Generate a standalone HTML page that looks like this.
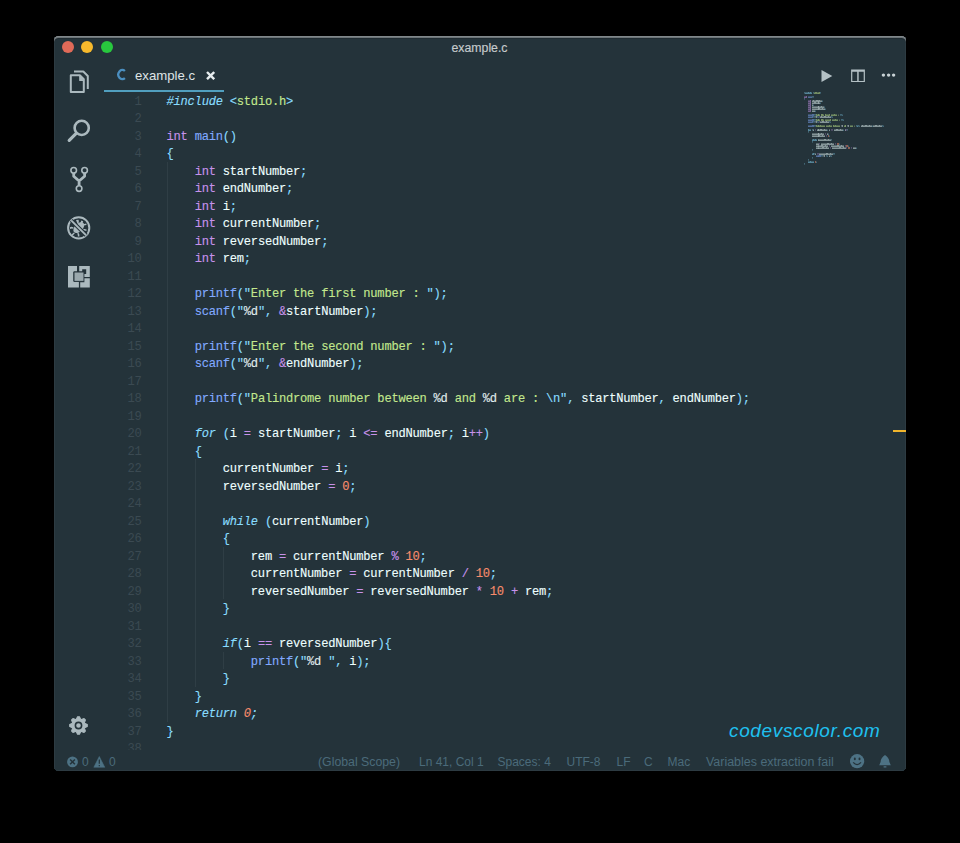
<!DOCTYPE html>
<html><head><meta charset="utf-8">
<style>
html,body{margin:0;padding:0;width:960px;height:843px;overflow:hidden;background:#000;}
body{position:relative;font-family:"Liberation Sans",sans-serif;}
.win{position:absolute;left:54px;top:36px;width:852px;height:735px;background:#24333a;border-radius:4.5px;overflow:hidden;box-shadow:inset 0 1px 0 #80878a, inset 0 2px 0 #6b7377, inset 0 3px 0 #1f2b31, inset 1px 0 0 #2d3b42, inset -1px 0 0 #2d3b42, inset 0 -1px 0 #2d3b42;}
.in{position:absolute;left:1px;top:0;width:851px;height:735px;}
.abs{position:absolute;}
.tl{position:absolute;top:5.4px;width:12px;height:12px;border-radius:50%;}
.title{position:absolute;left:-1px;width:851px;top:3.8px;text-align:center;font-size:12.3px;-webkit-text-stroke:0.15px currentColor;color:#c6cbcc;line-height:16px;}
.tab{position:absolute;left:80px;top:32px;font-size:13.2px;color:#dfe4e5;line-height:16px;}
.tabline{position:absolute;left:49px;top:53.5px;width:119.5px;height:2px;background:#519fbf;}
.code{position:absolute;left:111.5px;top:57.5px;font-family:"Liberation Mono",monospace;font-size:12.1px;letter-spacing:-0.23px;line-height:17.5px;color:#eeffff;-webkit-text-stroke:0.12px currentColor;}
.gut{position:absolute;left:38px;width:48.5px;top:57.5px;font-family:"Liberation Mono",monospace;font-size:12.1px;letter-spacing:-0.23px;line-height:17.5px;color:#3b4a52;text-align:right;}
.ln{height:17.5px;white-space:pre;}
.g{position:absolute;width:1px;height:17.5px;background:#2f3e45;}
.guides{position:absolute;left:-55px;top:-36px;}
.mm{position:absolute;left:749px;top:56px;opacity:0.6;}
.mmt{position:absolute;left:749.6px;top:56.6px;font-family:"Liberation Mono",monospace;font-size:1.61px;line-height:1.96px;color:#eeffff;opacity:0.8;}
.mml{height:1.96px;white-space:pre;}
.status{position:absolute;top:718.5px;font-size:12px;color:#4b6b7a;line-height:14px;white-space:pre;}
.wm{position:absolute;left:674px;top:684px;font-family:"Liberation Sans",sans-serif;font-style:italic;font-size:19px;color:#1fc0ef;letter-spacing:0.64px;}
</style></head>
<body>
<div class="win"><div class="in">
  <div class="tl" style="left:6.9px;background:#e06a58;"></div>
  <div class="tl" style="left:26.4px;background:#f7b92c;"></div>
  <div class="tl" style="left:45.8px;background:#28c83e;"></div>
  <div class="title">example.c</div>

  <!-- activity bar icons -->
  <svg class="abs" style="left:0;top:0" width="50" height="735" viewBox="55 36 50 735">
    <g fill="none" stroke="#abb9be" stroke-width="2" stroke-linejoin="round">
      <!-- files -->
      <path d="M70.8 75.3 H79.8 L83.8 79.3 V92.1 H70.8 Z"/>
      <path d="M74 71.5 H83.3 L87.8 76 V89" />
      <path d="M79.8 75.3 V80.4 H83.8" fill="#abb9be" stroke-width="1.2"/>
      <!-- search -->
      <circle cx="81.7" cy="127.9" r="7.1" stroke-width="2.6"/>
      <path d="M76.2 133.4 L69.2 140.4" stroke-width="3.2" stroke-linecap="round"/>
      <!-- git -->
      <circle cx="73.7" cy="170.3" r="2.8" stroke-width="1.6"/>
      <circle cx="84.6" cy="170.3" r="2.8" stroke-width="1.6"/>
      <circle cx="79.1" cy="188.6" r="2.8" stroke-width="1.6"/>
      <path d="M73.7 173.1 V176.3 L79.1 181 V185.8 M84.6 173.1 V176.3 L79.1 181" stroke-width="2.8"/>
      <!-- debug -->
      <circle cx="78.7" cy="227.9" r="10.6" stroke-width="2"/>
    </g>
    <g fill="#abb9be">
      <ellipse cx="78.8" cy="227.6" rx="6.6" ry="4.0" transform="rotate(-45 78.8 227.6)"/>
      <path d="M76 220 L77.4 223.4 L78.9 222.6 L78.6 219.8 Z M81.2 220.6 L80.6 223 L82.4 223.6 L83.2 221.2 Z" />
      <path d="M86.3 223.6 L83.2 224.2 L83.6 225.6 L86.5 225 Z"/>
      <path d="M86.6 229.6 L83.4 228.8 L83.2 230.2 L86.4 231 Z"/>
      <path d="M69.8 227.2 Q71.6 226.4 73.6 227.4 L73.2 228.8 Q71.6 228.2 70.2 229 Z"/>
      <path d="M77.8 236.6 Q78.2 235 77.2 233.6 L78.4 232.8 Q79.8 234.4 79.4 236.6 Z"/>
      <path d="M71.6 234.6 L73.8 232.4 L74.8 233.4 L72.6 235.6 Z"/>
    </g>
    <g fill="none">
      <path d="M71.2 220.4 L86.2 235.4" stroke="#24333a" stroke-width="4"/>
      <path d="M71.2 220.4 L86.2 235.4" stroke="#abb9be" stroke-width="2"/>
    </g>
    <g fill="#abb9be">
      <!-- extensions -->
      <path d="M68 266 H77 V271.6 H73.4 V281.6 H78.9 V287.6 H68 Z"/>
      <path d="M74 272 H84 V281.4 H74 Z" fill="#9aa8ad" stroke="#24333a" stroke-width="1"/>
      <path d="M79.2 266 H89.8 V276.9 H84.4 V274 H86.2 V269.3 H82.2 V271.2 H79.2 Z"/>
      <path d="M80.2 278.2 H89.8 V287.6 H80.2 V282.2 H84.4 V278.2 Z"/>
    </g>
    <!-- gear -->
    <g transform="translate(78.5 725.5)">
      <path fill="#abb9be" stroke="#abb9be" stroke-width="1.2" stroke-linejoin="round" d="M-2.33 -5.64 L-0.92 -8.75 L0.92 -8.75 L2.33 -5.64 L5.54 -6.84 L6.84 -5.54 L5.64 -2.33 L8.75 -0.92 L8.75 0.92 L5.64 2.33 L6.84 5.54 L5.54 6.84 L2.33 5.64 L0.92 8.75 L-0.92 8.75 L-2.33 5.64 L-5.54 6.84 L-6.84 5.54 L-5.64 2.33 L-8.75 0.92 L-8.75 -0.92 L-5.64 -2.33 L-6.84 -5.54 L-5.54 -6.84 Z"/>
      <circle r="3.1" fill="none" stroke="#24333a" stroke-width="1.6"/>
    </g>
  </svg>

  <!-- tab -->
  <svg class="abs" style="left:61px;top:32px" width="10" height="13" viewBox="0 0 10 13">
    <path d="M8.9 3.0 A4.0 4.6 0 1 0 8.9 10.1" fill="none" stroke="#4b8fc0" stroke-width="2.3"/>
  </svg>
  <div class="tab">example.c</div>
  <svg class="abs" style="left:150.5px;top:35px" width="9" height="9" viewBox="0 0 9 9">
    <path d="M1 1 L8.2 8.2 M8.2 1 L1 8.2" stroke="#e6ecee" stroke-width="2.4"/>
  </svg>
  <div class="tabline"></div>

  <!-- toolbar -->
  <svg class="abs" style="left:0;top:0" width="851" height="60" viewBox="55 36 851 60">
    <path d="M821.5 70 L832.3 76 L821.5 81.9 Z" fill="#b4c1c5"/>
    <path d="M851.1 69.5 H864.9 V82.1 H851.1 Z M852.3 71.8 V80.9 H857.2 V71.8 Z M858.7 71.8 V80.9 H863.7 V71.8 Z" fill="#b4c1c5" fill-rule="evenodd"/>
    <circle cx="883.4" cy="75.1" r="1.7" fill="#c8d2d5"/>
    <circle cx="888.6" cy="75.1" r="1.7" fill="#c8d2d5"/>
    <circle cx="893.6" cy="75.1" r="1.7" fill="#c8d2d5"/>
  </svg>

  <div class="guides">
<div class="g" style="left:166.5px;top:161.50px"></div>
<div class="g" style="left:166.5px;top:179.00px"></div>
<div class="g" style="left:166.5px;top:196.50px"></div>
<div class="g" style="left:166.5px;top:214.00px"></div>
<div class="g" style="left:166.5px;top:231.50px"></div>
<div class="g" style="left:166.5px;top:249.00px"></div>
<div class="g" style="left:166.5px;top:266.50px"></div>
<div class="g" style="left:166.5px;top:284.00px"></div>
<div class="g" style="left:166.5px;top:301.50px"></div>
<div class="g" style="left:166.5px;top:319.00px"></div>
<div class="g" style="left:166.5px;top:336.50px"></div>
<div class="g" style="left:166.5px;top:354.00px"></div>
<div class="g" style="left:166.5px;top:371.50px"></div>
<div class="g" style="left:166.5px;top:389.00px"></div>
<div class="g" style="left:166.5px;top:406.50px"></div>
<div class="g" style="left:166.5px;top:424.00px"></div>
<div class="g" style="left:166.5px;top:441.50px"></div>
<div class="g" style="left:166.5px;top:459.00px"></div>
<div class="g" style="left:194.6px;top:459.00px"></div>
<div class="g" style="left:166.5px;top:476.50px"></div>
<div class="g" style="left:194.6px;top:476.50px"></div>
<div class="g" style="left:166.5px;top:494.00px"></div>
<div class="g" style="left:194.6px;top:494.00px"></div>
<div class="g" style="left:166.5px;top:511.50px"></div>
<div class="g" style="left:194.6px;top:511.50px"></div>
<div class="g" style="left:166.5px;top:529.00px"></div>
<div class="g" style="left:194.6px;top:529.00px"></div>
<div class="g" style="left:166.5px;top:546.50px"></div>
<div class="g" style="left:194.6px;top:546.50px"></div>
<div class="g" style="left:222.7px;top:546.50px"></div>
<div class="g" style="left:166.5px;top:564.00px"></div>
<div class="g" style="left:194.6px;top:564.00px"></div>
<div class="g" style="left:222.7px;top:564.00px"></div>
<div class="g" style="left:166.5px;top:581.50px"></div>
<div class="g" style="left:194.6px;top:581.50px"></div>
<div class="g" style="left:222.7px;top:581.50px"></div>
<div class="g" style="left:166.5px;top:599.00px"></div>
<div class="g" style="left:194.6px;top:599.00px"></div>
<div class="g" style="left:166.5px;top:616.50px"></div>
<div class="g" style="left:194.6px;top:616.50px"></div>
<div class="g" style="left:166.5px;top:634.00px"></div>
<div class="g" style="left:194.6px;top:634.00px"></div>
<div class="g" style="left:166.5px;top:651.50px"></div>
<div class="g" style="left:194.6px;top:651.50px"></div>
<div class="g" style="left:222.7px;top:651.50px"></div>
<div class="g" style="left:166.5px;top:669.00px"></div>
<div class="g" style="left:194.6px;top:669.00px"></div>
<div class="g" style="left:166.5px;top:686.50px"></div>
<div class="g" style="left:166.5px;top:704.00px"></div>
  </div>
  <div class="gut">
<div class="ln">1</div>
<div class="ln">2</div>
<div class="ln">3</div>
<div class="ln">4</div>
<div class="ln">5</div>
<div class="ln">6</div>
<div class="ln">7</div>
<div class="ln">8</div>
<div class="ln">9</div>
<div class="ln">10</div>
<div class="ln">11</div>
<div class="ln">12</div>
<div class="ln">13</div>
<div class="ln">14</div>
<div class="ln">15</div>
<div class="ln">16</div>
<div class="ln">17</div>
<div class="ln">18</div>
<div class="ln">19</div>
<div class="ln">20</div>
<div class="ln">21</div>
<div class="ln">22</div>
<div class="ln">23</div>
<div class="ln">24</div>
<div class="ln">25</div>
<div class="ln">26</div>
<div class="ln">27</div>
<div class="ln">28</div>
<div class="ln">29</div>
<div class="ln">30</div>
<div class="ln">31</div>
<div class="ln">32</div>
<div class="ln">33</div>
<div class="ln">34</div>
<div class="ln">35</div>
<div class="ln">36</div>
<div class="ln">37</div>
<div class="ln">38</div>
  </div>
  <div class="code">
<div class="ln"><span style="color:#89ddff;font-style:italic">#include</span> <span style="color:#89ddff">&lt;</span><span style="color:#c3e88d">stdio.h</span><span style="color:#89ddff">&gt;</span></div>
<div class="ln">&nbsp;</div>
<div class="ln"><span style="color:#c792ea">int</span> <span style="color:#82aaff">main</span><span style="color:#89ddff">(</span><span style="color:#89ddff">)</span></div>
<div class="ln"><span style="color:#89ddff">{</span></div>
<div class="ln">    <span style="color:#c792ea">int</span> <span style="color:#eeffff">startNumber</span><span style="color:#89ddff">;</span></div>
<div class="ln">    <span style="color:#c792ea">int</span> <span style="color:#eeffff">endNumber</span><span style="color:#89ddff">;</span></div>
<div class="ln">    <span style="color:#c792ea">int</span> <span style="color:#eeffff">i</span><span style="color:#89ddff">;</span></div>
<div class="ln">    <span style="color:#c792ea">int</span> <span style="color:#eeffff">currentNumber</span><span style="color:#89ddff">;</span></div>
<div class="ln">    <span style="color:#c792ea">int</span> <span style="color:#eeffff">reversedNumber</span><span style="color:#89ddff">;</span></div>
<div class="ln">    <span style="color:#c792ea">int</span> <span style="color:#eeffff">rem</span><span style="color:#89ddff">;</span></div>
<div class="ln">&nbsp;</div>
<div class="ln">    <span style="color:#82aaff">printf</span><span style="color:#89ddff">(</span><span style="color:#89ddff">&quot;</span><span style="color:#c3e88d">Enter the first number : </span><span style="color:#89ddff">&quot;</span><span style="color:#89ddff">)</span><span style="color:#89ddff">;</span></div>
<div class="ln">    <span style="color:#82aaff">scanf</span><span style="color:#89ddff">(</span><span style="color:#89ddff">&quot;</span><span style="color:#e0ecee">%d</span><span style="color:#89ddff">&quot;</span><span style="color:#89ddff">,</span> <span style="color:#c792ea">&amp;</span><span style="color:#eeffff">startNumber</span><span style="color:#89ddff">)</span><span style="color:#89ddff">;</span></div>
<div class="ln">&nbsp;</div>
<div class="ln">    <span style="color:#82aaff">printf</span><span style="color:#89ddff">(</span><span style="color:#89ddff">&quot;</span><span style="color:#c3e88d">Enter the second number : </span><span style="color:#89ddff">&quot;</span><span style="color:#89ddff">)</span><span style="color:#89ddff">;</span></div>
<div class="ln">    <span style="color:#82aaff">scanf</span><span style="color:#89ddff">(</span><span style="color:#89ddff">&quot;</span><span style="color:#e0ecee">%d</span><span style="color:#89ddff">&quot;</span><span style="color:#89ddff">,</span> <span style="color:#c792ea">&amp;</span><span style="color:#eeffff">endNumber</span><span style="color:#89ddff">)</span><span style="color:#89ddff">;</span></div>
<div class="ln">&nbsp;</div>
<div class="ln">    <span style="color:#82aaff">printf</span><span style="color:#89ddff">(</span><span style="color:#89ddff">&quot;</span><span style="color:#c3e88d">Palindrome number between </span><span style="color:#e0ecee">%d</span><span style="color:#c3e88d"> and </span><span style="color:#e0ecee">%d</span><span style="color:#c3e88d"> are : </span><span style="color:#89ddff">\n</span><span style="color:#89ddff">&quot;</span><span style="color:#89ddff">,</span> <span style="color:#eeffff">startNumber</span><span style="color:#89ddff">,</span> <span style="color:#eeffff">endNumber</span><span style="color:#89ddff">)</span><span style="color:#89ddff">;</span></div>
<div class="ln">&nbsp;</div>
<div class="ln">    <span style="color:#89ddff;font-style:italic">for</span> <span style="color:#89ddff">(</span><span style="color:#eeffff">i</span> <span style="color:#c792ea">=</span> <span style="color:#eeffff">startNumber</span><span style="color:#89ddff">;</span> <span style="color:#eeffff">i</span> <span style="color:#c792ea">&lt;=</span> <span style="color:#eeffff">endNumber</span><span style="color:#89ddff">;</span> <span style="color:#eeffff">i</span><span style="color:#c792ea">++</span><span style="color:#89ddff">)</span></div>
<div class="ln">    <span style="color:#89ddff">{</span></div>
<div class="ln">        <span style="color:#eeffff">currentNumber</span> <span style="color:#c792ea">=</span> <span style="color:#eeffff">i</span><span style="color:#89ddff">;</span></div>
<div class="ln">        <span style="color:#eeffff">reversedNumber</span> <span style="color:#c792ea">=</span> <span style="color:#f78c6c">0</span><span style="color:#89ddff">;</span></div>
<div class="ln">&nbsp;</div>
<div class="ln">        <span style="color:#89ddff;font-style:italic">while</span> <span style="color:#89ddff">(</span><span style="color:#eeffff">currentNumber</span><span style="color:#89ddff">)</span></div>
<div class="ln">        <span style="color:#89ddff">{</span></div>
<div class="ln">            <span style="color:#eeffff">rem</span> <span style="color:#c792ea">=</span> <span style="color:#eeffff">currentNumber</span> <span style="color:#c792ea">%</span> <span style="color:#f78c6c">10</span><span style="color:#89ddff">;</span></div>
<div class="ln">            <span style="color:#eeffff">currentNumber</span> <span style="color:#c792ea">=</span> <span style="color:#eeffff">currentNumber</span> <span style="color:#c792ea">/</span> <span style="color:#f78c6c">10</span><span style="color:#89ddff">;</span></div>
<div class="ln">            <span style="color:#eeffff">reversedNumber</span> <span style="color:#c792ea">=</span> <span style="color:#eeffff">reversedNumber</span> <span style="color:#c792ea">*</span> <span style="color:#f78c6c">10</span> <span style="color:#c792ea">+</span> <span style="color:#eeffff">rem</span><span style="color:#89ddff">;</span></div>
<div class="ln">        <span style="color:#89ddff">}</span></div>
<div class="ln">&nbsp;</div>
<div class="ln">        <span style="color:#89ddff;font-style:italic">if</span><span style="color:#89ddff">(</span><span style="color:#eeffff">i</span> <span style="color:#c792ea">==</span> <span style="color:#eeffff">reversedNumber</span><span style="color:#89ddff">)</span><span style="color:#89ddff">{</span></div>
<div class="ln">            <span style="color:#82aaff">printf</span><span style="color:#89ddff">(</span><span style="color:#89ddff">&quot;</span><span style="color:#e0ecee">%d</span><span style="color:#c3e88d"> </span><span style="color:#89ddff">&quot;</span><span style="color:#89ddff">,</span> <span style="color:#eeffff">i</span><span style="color:#89ddff">)</span><span style="color:#89ddff">;</span></div>
<div class="ln">        <span style="color:#89ddff">}</span></div>
<div class="ln">    <span style="color:#89ddff">}</span></div>
<div class="ln">    <span style="color:#89ddff;font-style:italic">return</span> <span style="color:#f78c6c;font-style:italic">0</span><span style="color:#89ddff;font-style:italic">;</span></div>
<div class="ln"><span style="color:#89ddff">}</span></div>
<div class="ln">&nbsp;</div>
  </div>

  <svg class="mm" width="100" height="80" viewBox="0 0 100 80" shape-rendering="crispEdges"><rect x="0" y="0" width="1" height="1" fill="#89ddff" fill-opacity="0.50"/><rect x="0" y="1" width="1" height="1" fill="#89ddff" fill-opacity="0.35"/><rect x="1" y="0" width="1" height="1" fill="#89ddff" fill-opacity="0.45"/><rect x="1" y="1" width="1" height="1" fill="#89ddff" fill-opacity="0.80"/><rect x="2" y="0" width="1" height="1" fill="#89ddff" fill-opacity="0.45"/><rect x="2" y="1" width="1" height="1" fill="#89ddff" fill-opacity="0.80"/><rect x="3" y="0" width="1" height="1" fill="#89ddff" fill-opacity="0.45"/><rect x="3" y="1" width="1" height="1" fill="#89ddff" fill-opacity="0.80"/><rect x="4" y="0" width="1" height="1" fill="#89ddff" fill-opacity="0.85"/><rect x="4" y="1" width="1" height="1" fill="#89ddff" fill-opacity="0.80"/><rect x="5" y="0" width="1" height="1" fill="#89ddff" fill-opacity="0.45"/><rect x="5" y="1" width="1" height="1" fill="#89ddff" fill-opacity="0.80"/><rect x="6" y="0" width="1" height="1" fill="#89ddff" fill-opacity="0.85"/><rect x="6" y="1" width="1" height="1" fill="#89ddff" fill-opacity="0.80"/><rect x="7" y="0" width="1" height="1" fill="#89ddff" fill-opacity="0.45"/><rect x="7" y="1" width="1" height="1" fill="#89ddff" fill-opacity="0.80"/><rect x="9" y="0" width="1" height="1" fill="#89ddff" fill-opacity="0.50"/><rect x="9" y="1" width="1" height="1" fill="#89ddff" fill-opacity="0.35"/><rect x="10" y="0" width="1" height="1" fill="#c3e88d" fill-opacity="0.45"/><rect x="10" y="1" width="1" height="1" fill="#c3e88d" fill-opacity="0.80"/><rect x="11" y="0" width="1" height="1" fill="#c3e88d" fill-opacity="0.85"/><rect x="11" y="1" width="1" height="1" fill="#c3e88d" fill-opacity="0.80"/><rect x="12" y="0" width="1" height="1" fill="#c3e88d" fill-opacity="0.85"/><rect x="12" y="1" width="1" height="1" fill="#c3e88d" fill-opacity="0.80"/><rect x="13" y="0" width="1" height="1" fill="#c3e88d" fill-opacity="0.45"/><rect x="13" y="1" width="1" height="1" fill="#c3e88d" fill-opacity="0.80"/><rect x="14" y="0" width="1" height="1" fill="#c3e88d" fill-opacity="0.45"/><rect x="14" y="1" width="1" height="1" fill="#c3e88d" fill-opacity="0.80"/><rect x="14" y="0" width="1" height="1" fill="#c3e88d" fill-opacity="0.25"/><rect x="14" y="1" width="1" height="1" fill="#c3e88d" fill-opacity="0.50"/><rect x="15" y="0" width="1" height="1" fill="#c3e88d" fill-opacity="0.85"/><rect x="15" y="1" width="1" height="1" fill="#c3e88d" fill-opacity="0.80"/><rect x="16" y="0" width="1" height="1" fill="#89ddff" fill-opacity="0.50"/><rect x="16" y="1" width="1" height="1" fill="#89ddff" fill-opacity="0.35"/><rect x="0" y="4" width="1" height="1" fill="#c792ea" fill-opacity="0.45"/><rect x="0" y="5" width="1" height="1" fill="#c792ea" fill-opacity="0.80"/><rect x="1" y="4" width="1" height="1" fill="#c792ea" fill-opacity="0.45"/><rect x="1" y="5" width="1" height="1" fill="#c792ea" fill-opacity="0.80"/><rect x="2" y="4" width="1" height="1" fill="#c792ea" fill-opacity="0.85"/><rect x="2" y="5" width="1" height="1" fill="#c792ea" fill-opacity="0.80"/><rect x="4" y="4" width="1" height="1" fill="#82aaff" fill-opacity="0.45"/><rect x="4" y="5" width="1" height="1" fill="#82aaff" fill-opacity="0.80"/><rect x="5" y="4" width="1" height="1" fill="#82aaff" fill-opacity="0.45"/><rect x="5" y="5" width="1" height="1" fill="#82aaff" fill-opacity="0.80"/><rect x="6" y="4" width="1" height="1" fill="#82aaff" fill-opacity="0.45"/><rect x="6" y="5" width="1" height="1" fill="#82aaff" fill-opacity="0.80"/><rect x="7" y="4" width="1" height="1" fill="#82aaff" fill-opacity="0.45"/><rect x="7" y="5" width="1" height="1" fill="#82aaff" fill-opacity="0.80"/><rect x="8" y="4" width="1" height="1" fill="#89ddff" fill-opacity="0.50"/><rect x="8" y="5" width="1" height="1" fill="#89ddff" fill-opacity="0.35"/><rect x="9" y="4" width="1" height="1" fill="#89ddff" fill-opacity="0.50"/><rect x="9" y="5" width="1" height="1" fill="#89ddff" fill-opacity="0.35"/><rect x="0" y="6" width="1" height="1" fill="#89ddff" fill-opacity="0.50"/><rect x="0" y="7" width="1" height="1" fill="#89ddff" fill-opacity="0.35"/><rect x="4" y="8" width="1" height="1" fill="#c792ea" fill-opacity="0.45"/><rect x="4" y="9" width="1" height="1" fill="#c792ea" fill-opacity="0.80"/><rect x="5" y="8" width="1" height="1" fill="#c792ea" fill-opacity="0.45"/><rect x="5" y="9" width="1" height="1" fill="#c792ea" fill-opacity="0.80"/><rect x="6" y="8" width="1" height="1" fill="#c792ea" fill-opacity="0.85"/><rect x="6" y="9" width="1" height="1" fill="#c792ea" fill-opacity="0.80"/><rect x="8" y="8" width="1" height="1" fill="#eeffff" fill-opacity="0.45"/><rect x="8" y="9" width="1" height="1" fill="#eeffff" fill-opacity="0.80"/><rect x="9" y="8" width="1" height="1" fill="#eeffff" fill-opacity="0.85"/><rect x="9" y="9" width="1" height="1" fill="#eeffff" fill-opacity="0.80"/><rect x="10" y="8" width="1" height="1" fill="#eeffff" fill-opacity="0.45"/><rect x="10" y="9" width="1" height="1" fill="#eeffff" fill-opacity="0.80"/><rect x="11" y="8" width="1" height="1" fill="#eeffff" fill-opacity="0.45"/><rect x="11" y="9" width="1" height="1" fill="#eeffff" fill-opacity="0.80"/><rect x="12" y="8" width="1" height="1" fill="#eeffff" fill-opacity="0.85"/><rect x="12" y="9" width="1" height="1" fill="#eeffff" fill-opacity="0.80"/><rect x="13" y="8" width="1" height="1" fill="#eeffff" fill-opacity="0.85"/><rect x="13" y="9" width="1" height="1" fill="#eeffff" fill-opacity="0.80"/><rect x="14" y="8" width="1" height="1" fill="#eeffff" fill-opacity="0.45"/><rect x="14" y="9" width="1" height="1" fill="#eeffff" fill-opacity="0.80"/><rect x="14" y="8" width="1" height="1" fill="#eeffff" fill-opacity="0.45"/><rect x="14" y="9" width="1" height="1" fill="#eeffff" fill-opacity="0.80"/><rect x="15" y="8" width="1" height="1" fill="#eeffff" fill-opacity="0.85"/><rect x="15" y="9" width="1" height="1" fill="#eeffff" fill-opacity="0.80"/><rect x="16" y="8" width="1" height="1" fill="#eeffff" fill-opacity="0.45"/><rect x="16" y="9" width="1" height="1" fill="#eeffff" fill-opacity="0.80"/><rect x="17" y="8" width="1" height="1" fill="#eeffff" fill-opacity="0.45"/><rect x="17" y="9" width="1" height="1" fill="#eeffff" fill-opacity="0.80"/><rect x="18" y="8" width="1" height="1" fill="#89ddff" fill-opacity="0.25"/><rect x="18" y="9" width="1" height="1" fill="#89ddff" fill-opacity="0.50"/><rect x="4" y="10" width="1" height="1" fill="#c792ea" fill-opacity="0.45"/><rect x="4" y="11" width="1" height="1" fill="#c792ea" fill-opacity="0.80"/><rect x="5" y="10" width="1" height="1" fill="#c792ea" fill-opacity="0.45"/><rect x="5" y="11" width="1" height="1" fill="#c792ea" fill-opacity="0.80"/><rect x="6" y="10" width="1" height="1" fill="#c792ea" fill-opacity="0.85"/><rect x="6" y="11" width="1" height="1" fill="#c792ea" fill-opacity="0.80"/><rect x="8" y="10" width="1" height="1" fill="#eeffff" fill-opacity="0.45"/><rect x="8" y="11" width="1" height="1" fill="#eeffff" fill-opacity="0.80"/><rect x="9" y="10" width="1" height="1" fill="#eeffff" fill-opacity="0.45"/><rect x="9" y="11" width="1" height="1" fill="#eeffff" fill-opacity="0.80"/><rect x="10" y="10" width="1" height="1" fill="#eeffff" fill-opacity="0.85"/><rect x="10" y="11" width="1" height="1" fill="#eeffff" fill-opacity="0.80"/><rect x="11" y="10" width="1" height="1" fill="#eeffff" fill-opacity="0.85"/><rect x="11" y="11" width="1" height="1" fill="#eeffff" fill-opacity="0.80"/><rect x="12" y="10" width="1" height="1" fill="#eeffff" fill-opacity="0.45"/><rect x="12" y="11" width="1" height="1" fill="#eeffff" fill-opacity="0.80"/><rect x="13" y="10" width="1" height="1" fill="#eeffff" fill-opacity="0.45"/><rect x="13" y="11" width="1" height="1" fill="#eeffff" fill-opacity="0.80"/><rect x="14" y="10" width="1" height="1" fill="#eeffff" fill-opacity="0.85"/><rect x="14" y="11" width="1" height="1" fill="#eeffff" fill-opacity="0.80"/><rect x="14" y="10" width="1" height="1" fill="#eeffff" fill-opacity="0.45"/><rect x="14" y="11" width="1" height="1" fill="#eeffff" fill-opacity="0.80"/><rect x="15" y="10" width="1" height="1" fill="#eeffff" fill-opacity="0.45"/><rect x="15" y="11" width="1" height="1" fill="#eeffff" fill-opacity="0.80"/><rect x="16" y="10" width="1" height="1" fill="#89ddff" fill-opacity="0.25"/><rect x="16" y="11" width="1" height="1" fill="#89ddff" fill-opacity="0.50"/><rect x="4" y="12" width="1" height="1" fill="#c792ea" fill-opacity="0.45"/><rect x="4" y="13" width="1" height="1" fill="#c792ea" fill-opacity="0.80"/><rect x="5" y="12" width="1" height="1" fill="#c792ea" fill-opacity="0.45"/><rect x="5" y="13" width="1" height="1" fill="#c792ea" fill-opacity="0.80"/><rect x="6" y="12" width="1" height="1" fill="#c792ea" fill-opacity="0.85"/><rect x="6" y="13" width="1" height="1" fill="#c792ea" fill-opacity="0.80"/><rect x="8" y="12" width="1" height="1" fill="#eeffff" fill-opacity="0.45"/><rect x="8" y="13" width="1" height="1" fill="#eeffff" fill-opacity="0.80"/><rect x="9" y="12" width="1" height="1" fill="#89ddff" fill-opacity="0.25"/><rect x="9" y="13" width="1" height="1" fill="#89ddff" fill-opacity="0.50"/><rect x="4" y="14" width="1" height="1" fill="#c792ea" fill-opacity="0.45"/><rect x="4" y="15" width="1" height="1" fill="#c792ea" fill-opacity="0.80"/><rect x="5" y="14" width="1" height="1" fill="#c792ea" fill-opacity="0.45"/><rect x="5" y="15" width="1" height="1" fill="#c792ea" fill-opacity="0.80"/><rect x="6" y="14" width="1" height="1" fill="#c792ea" fill-opacity="0.85"/><rect x="6" y="15" width="1" height="1" fill="#c792ea" fill-opacity="0.80"/><rect x="8" y="14" width="1" height="1" fill="#eeffff" fill-opacity="0.45"/><rect x="8" y="15" width="1" height="1" fill="#eeffff" fill-opacity="0.80"/><rect x="9" y="14" width="1" height="1" fill="#eeffff" fill-opacity="0.45"/><rect x="9" y="15" width="1" height="1" fill="#eeffff" fill-opacity="0.80"/><rect x="10" y="14" width="1" height="1" fill="#eeffff" fill-opacity="0.45"/><rect x="10" y="15" width="1" height="1" fill="#eeffff" fill-opacity="0.80"/><rect x="11" y="14" width="1" height="1" fill="#eeffff" fill-opacity="0.45"/><rect x="11" y="15" width="1" height="1" fill="#eeffff" fill-opacity="0.80"/><rect x="12" y="14" width="1" height="1" fill="#eeffff" fill-opacity="0.45"/><rect x="12" y="15" width="1" height="1" fill="#eeffff" fill-opacity="0.80"/><rect x="13" y="14" width="1" height="1" fill="#eeffff" fill-opacity="0.45"/><rect x="13" y="15" width="1" height="1" fill="#eeffff" fill-opacity="0.80"/><rect x="14" y="14" width="1" height="1" fill="#eeffff" fill-opacity="0.85"/><rect x="14" y="15" width="1" height="1" fill="#eeffff" fill-opacity="0.80"/><rect x="14" y="14" width="1" height="1" fill="#eeffff" fill-opacity="0.85"/><rect x="14" y="15" width="1" height="1" fill="#eeffff" fill-opacity="0.80"/><rect x="15" y="14" width="1" height="1" fill="#eeffff" fill-opacity="0.45"/><rect x="15" y="15" width="1" height="1" fill="#eeffff" fill-opacity="0.80"/><rect x="16" y="14" width="1" height="1" fill="#eeffff" fill-opacity="0.45"/><rect x="16" y="15" width="1" height="1" fill="#eeffff" fill-opacity="0.80"/><rect x="17" y="14" width="1" height="1" fill="#eeffff" fill-opacity="0.85"/><rect x="17" y="15" width="1" height="1" fill="#eeffff" fill-opacity="0.80"/><rect x="18" y="14" width="1" height="1" fill="#eeffff" fill-opacity="0.45"/><rect x="18" y="15" width="1" height="1" fill="#eeffff" fill-opacity="0.80"/><rect x="19" y="14" width="1" height="1" fill="#eeffff" fill-opacity="0.45"/><rect x="19" y="15" width="1" height="1" fill="#eeffff" fill-opacity="0.80"/><rect x="20" y="14" width="1" height="1" fill="#89ddff" fill-opacity="0.25"/><rect x="20" y="15" width="1" height="1" fill="#89ddff" fill-opacity="0.50"/><rect x="4" y="16" width="1" height="1" fill="#c792ea" fill-opacity="0.45"/><rect x="4" y="17" width="1" height="1" fill="#c792ea" fill-opacity="0.80"/><rect x="5" y="16" width="1" height="1" fill="#c792ea" fill-opacity="0.45"/><rect x="5" y="17" width="1" height="1" fill="#c792ea" fill-opacity="0.80"/><rect x="6" y="16" width="1" height="1" fill="#c792ea" fill-opacity="0.85"/><rect x="6" y="17" width="1" height="1" fill="#c792ea" fill-opacity="0.80"/><rect x="8" y="16" width="1" height="1" fill="#eeffff" fill-opacity="0.45"/><rect x="8" y="17" width="1" height="1" fill="#eeffff" fill-opacity="0.80"/><rect x="9" y="16" width="1" height="1" fill="#eeffff" fill-opacity="0.45"/><rect x="9" y="17" width="1" height="1" fill="#eeffff" fill-opacity="0.80"/><rect x="10" y="16" width="1" height="1" fill="#eeffff" fill-opacity="0.45"/><rect x="10" y="17" width="1" height="1" fill="#eeffff" fill-opacity="0.80"/><rect x="11" y="16" width="1" height="1" fill="#eeffff" fill-opacity="0.45"/><rect x="11" y="17" width="1" height="1" fill="#eeffff" fill-opacity="0.80"/><rect x="12" y="16" width="1" height="1" fill="#eeffff" fill-opacity="0.45"/><rect x="12" y="17" width="1" height="1" fill="#eeffff" fill-opacity="0.80"/><rect x="13" y="16" width="1" height="1" fill="#eeffff" fill-opacity="0.45"/><rect x="13" y="17" width="1" height="1" fill="#eeffff" fill-opacity="0.80"/><rect x="14" y="16" width="1" height="1" fill="#eeffff" fill-opacity="0.45"/><rect x="14" y="17" width="1" height="1" fill="#eeffff" fill-opacity="0.80"/><rect x="14" y="16" width="1" height="1" fill="#eeffff" fill-opacity="0.85"/><rect x="14" y="17" width="1" height="1" fill="#eeffff" fill-opacity="0.80"/><rect x="15" y="16" width="1" height="1" fill="#eeffff" fill-opacity="0.85"/><rect x="15" y="17" width="1" height="1" fill="#eeffff" fill-opacity="0.80"/><rect x="16" y="16" width="1" height="1" fill="#eeffff" fill-opacity="0.45"/><rect x="16" y="17" width="1" height="1" fill="#eeffff" fill-opacity="0.80"/><rect x="17" y="16" width="1" height="1" fill="#eeffff" fill-opacity="0.45"/><rect x="17" y="17" width="1" height="1" fill="#eeffff" fill-opacity="0.80"/><rect x="18" y="16" width="1" height="1" fill="#eeffff" fill-opacity="0.85"/><rect x="18" y="17" width="1" height="1" fill="#eeffff" fill-opacity="0.80"/><rect x="19" y="16" width="1" height="1" fill="#eeffff" fill-opacity="0.45"/><rect x="19" y="17" width="1" height="1" fill="#eeffff" fill-opacity="0.80"/><rect x="20" y="16" width="1" height="1" fill="#eeffff" fill-opacity="0.45"/><rect x="20" y="17" width="1" height="1" fill="#eeffff" fill-opacity="0.80"/><rect x="21" y="16" width="1" height="1" fill="#89ddff" fill-opacity="0.25"/><rect x="21" y="17" width="1" height="1" fill="#89ddff" fill-opacity="0.50"/><rect x="4" y="18" width="1" height="1" fill="#c792ea" fill-opacity="0.45"/><rect x="4" y="19" width="1" height="1" fill="#c792ea" fill-opacity="0.80"/><rect x="5" y="18" width="1" height="1" fill="#c792ea" fill-opacity="0.45"/><rect x="5" y="19" width="1" height="1" fill="#c792ea" fill-opacity="0.80"/><rect x="6" y="18" width="1" height="1" fill="#c792ea" fill-opacity="0.85"/><rect x="6" y="19" width="1" height="1" fill="#c792ea" fill-opacity="0.80"/><rect x="8" y="18" width="1" height="1" fill="#eeffff" fill-opacity="0.45"/><rect x="8" y="19" width="1" height="1" fill="#eeffff" fill-opacity="0.80"/><rect x="9" y="18" width="1" height="1" fill="#eeffff" fill-opacity="0.45"/><rect x="9" y="19" width="1" height="1" fill="#eeffff" fill-opacity="0.80"/><rect x="10" y="18" width="1" height="1" fill="#eeffff" fill-opacity="0.45"/><rect x="10" y="19" width="1" height="1" fill="#eeffff" fill-opacity="0.80"/><rect x="11" y="18" width="1" height="1" fill="#89ddff" fill-opacity="0.25"/><rect x="11" y="19" width="1" height="1" fill="#89ddff" fill-opacity="0.50"/><rect x="4" y="22" width="1" height="1" fill="#82aaff" fill-opacity="0.45"/><rect x="4" y="23" width="1" height="1" fill="#82aaff" fill-opacity="0.80"/><rect x="5" y="22" width="1" height="1" fill="#82aaff" fill-opacity="0.45"/><rect x="5" y="23" width="1" height="1" fill="#82aaff" fill-opacity="0.80"/><rect x="6" y="22" width="1" height="1" fill="#82aaff" fill-opacity="0.45"/><rect x="6" y="23" width="1" height="1" fill="#82aaff" fill-opacity="0.80"/><rect x="7" y="22" width="1" height="1" fill="#82aaff" fill-opacity="0.45"/><rect x="7" y="23" width="1" height="1" fill="#82aaff" fill-opacity="0.80"/><rect x="8" y="22" width="1" height="1" fill="#82aaff" fill-opacity="0.85"/><rect x="8" y="23" width="1" height="1" fill="#82aaff" fill-opacity="0.80"/><rect x="9" y="22" width="1" height="1" fill="#82aaff" fill-opacity="0.85"/><rect x="9" y="23" width="1" height="1" fill="#82aaff" fill-opacity="0.80"/><rect x="10" y="22" width="1" height="1" fill="#89ddff" fill-opacity="0.50"/><rect x="10" y="23" width="1" height="1" fill="#89ddff" fill-opacity="0.35"/><rect x="11" y="22" width="1" height="1" fill="#89ddff" fill-opacity="0.50"/><rect x="11" y="23" width="1" height="1" fill="#89ddff" fill-opacity="0.35"/><rect x="12" y="22" width="1" height="1" fill="#c3e88d" fill-opacity="0.85"/><rect x="12" y="23" width="1" height="1" fill="#c3e88d" fill-opacity="0.80"/><rect x="13" y="22" width="1" height="1" fill="#c3e88d" fill-opacity="0.45"/><rect x="13" y="23" width="1" height="1" fill="#c3e88d" fill-opacity="0.80"/><rect x="14" y="22" width="1" height="1" fill="#c3e88d" fill-opacity="0.85"/><rect x="14" y="23" width="1" height="1" fill="#c3e88d" fill-opacity="0.80"/><rect x="14" y="22" width="1" height="1" fill="#c3e88d" fill-opacity="0.45"/><rect x="14" y="23" width="1" height="1" fill="#c3e88d" fill-opacity="0.80"/><rect x="15" y="22" width="1" height="1" fill="#c3e88d" fill-opacity="0.45"/><rect x="15" y="23" width="1" height="1" fill="#c3e88d" fill-opacity="0.80"/><rect x="17" y="22" width="1" height="1" fill="#c3e88d" fill-opacity="0.85"/><rect x="17" y="23" width="1" height="1" fill="#c3e88d" fill-opacity="0.80"/><rect x="18" y="22" width="1" height="1" fill="#c3e88d" fill-opacity="0.85"/><rect x="18" y="23" width="1" height="1" fill="#c3e88d" fill-opacity="0.80"/><rect x="19" y="22" width="1" height="1" fill="#c3e88d" fill-opacity="0.45"/><rect x="19" y="23" width="1" height="1" fill="#c3e88d" fill-opacity="0.80"/><rect x="21" y="22" width="1" height="1" fill="#c3e88d" fill-opacity="0.85"/><rect x="21" y="23" width="1" height="1" fill="#c3e88d" fill-opacity="0.80"/><rect x="22" y="22" width="1" height="1" fill="#c3e88d" fill-opacity="0.45"/><rect x="22" y="23" width="1" height="1" fill="#c3e88d" fill-opacity="0.80"/><rect x="23" y="22" width="1" height="1" fill="#c3e88d" fill-opacity="0.45"/><rect x="23" y="23" width="1" height="1" fill="#c3e88d" fill-opacity="0.80"/><rect x="24" y="22" width="1" height="1" fill="#c3e88d" fill-opacity="0.45"/><rect x="24" y="23" width="1" height="1" fill="#c3e88d" fill-opacity="0.80"/><rect x="25" y="22" width="1" height="1" fill="#c3e88d" fill-opacity="0.85"/><rect x="25" y="23" width="1" height="1" fill="#c3e88d" fill-opacity="0.80"/><rect x="27" y="22" width="1" height="1" fill="#c3e88d" fill-opacity="0.45"/><rect x="27" y="23" width="1" height="1" fill="#c3e88d" fill-opacity="0.80"/><rect x="28" y="22" width="1" height="1" fill="#c3e88d" fill-opacity="0.45"/><rect x="28" y="23" width="1" height="1" fill="#c3e88d" fill-opacity="0.80"/><rect x="29" y="22" width="1" height="1" fill="#c3e88d" fill-opacity="0.45"/><rect x="29" y="23" width="1" height="1" fill="#c3e88d" fill-opacity="0.80"/><rect x="30" y="22" width="1" height="1" fill="#c3e88d" fill-opacity="0.85"/><rect x="30" y="23" width="1" height="1" fill="#c3e88d" fill-opacity="0.80"/><rect x="31" y="22" width="1" height="1" fill="#c3e88d" fill-opacity="0.45"/><rect x="31" y="23" width="1" height="1" fill="#c3e88d" fill-opacity="0.80"/><rect x="32" y="22" width="1" height="1" fill="#c3e88d" fill-opacity="0.45"/><rect x="32" y="23" width="1" height="1" fill="#c3e88d" fill-opacity="0.80"/><rect x="34" y="22" width="1" height="1" fill="#c3e88d" fill-opacity="0.25"/><rect x="34" y="23" width="1" height="1" fill="#c3e88d" fill-opacity="0.50"/><rect x="36" y="22" width="1" height="1" fill="#89ddff" fill-opacity="0.50"/><rect x="36" y="23" width="1" height="1" fill="#89ddff" fill-opacity="0.35"/><rect x="37" y="22" width="1" height="1" fill="#89ddff" fill-opacity="0.50"/><rect x="37" y="23" width="1" height="1" fill="#89ddff" fill-opacity="0.35"/><rect x="38" y="22" width="1" height="1" fill="#89ddff" fill-opacity="0.25"/><rect x="38" y="23" width="1" height="1" fill="#89ddff" fill-opacity="0.50"/><rect x="4" y="24" width="1" height="1" fill="#82aaff" fill-opacity="0.45"/><rect x="4" y="25" width="1" height="1" fill="#82aaff" fill-opacity="0.80"/><rect x="5" y="24" width="1" height="1" fill="#82aaff" fill-opacity="0.45"/><rect x="5" y="25" width="1" height="1" fill="#82aaff" fill-opacity="0.80"/><rect x="6" y="24" width="1" height="1" fill="#82aaff" fill-opacity="0.45"/><rect x="6" y="25" width="1" height="1" fill="#82aaff" fill-opacity="0.80"/><rect x="7" y="24" width="1" height="1" fill="#82aaff" fill-opacity="0.45"/><rect x="7" y="25" width="1" height="1" fill="#82aaff" fill-opacity="0.80"/><rect x="8" y="24" width="1" height="1" fill="#82aaff" fill-opacity="0.85"/><rect x="8" y="25" width="1" height="1" fill="#82aaff" fill-opacity="0.80"/><rect x="9" y="24" width="1" height="1" fill="#89ddff" fill-opacity="0.50"/><rect x="9" y="25" width="1" height="1" fill="#89ddff" fill-opacity="0.35"/><rect x="10" y="24" width="1" height="1" fill="#89ddff" fill-opacity="0.50"/><rect x="10" y="25" width="1" height="1" fill="#89ddff" fill-opacity="0.35"/><rect x="11" y="24" width="1" height="1" fill="#e0ecee" fill-opacity="0.50"/><rect x="11" y="25" width="1" height="1" fill="#e0ecee" fill-opacity="0.35"/><rect x="12" y="24" width="1" height="1" fill="#e0ecee" fill-opacity="0.85"/><rect x="12" y="25" width="1" height="1" fill="#e0ecee" fill-opacity="0.80"/><rect x="13" y="24" width="1" height="1" fill="#89ddff" fill-opacity="0.50"/><rect x="13" y="25" width="1" height="1" fill="#89ddff" fill-opacity="0.35"/><rect x="14" y="24" width="1" height="1" fill="#89ddff" fill-opacity="0.25"/><rect x="14" y="25" width="1" height="1" fill="#89ddff" fill-opacity="0.50"/><rect x="15" y="24" width="1" height="1" fill="#c792ea" fill-opacity="0.50"/><rect x="15" y="25" width="1" height="1" fill="#c792ea" fill-opacity="0.35"/><rect x="16" y="24" width="1" height="1" fill="#eeffff" fill-opacity="0.45"/><rect x="16" y="25" width="1" height="1" fill="#eeffff" fill-opacity="0.80"/><rect x="17" y="24" width="1" height="1" fill="#eeffff" fill-opacity="0.85"/><rect x="17" y="25" width="1" height="1" fill="#eeffff" fill-opacity="0.80"/><rect x="18" y="24" width="1" height="1" fill="#eeffff" fill-opacity="0.45"/><rect x="18" y="25" width="1" height="1" fill="#eeffff" fill-opacity="0.80"/><rect x="19" y="24" width="1" height="1" fill="#eeffff" fill-opacity="0.45"/><rect x="19" y="25" width="1" height="1" fill="#eeffff" fill-opacity="0.80"/><rect x="20" y="24" width="1" height="1" fill="#eeffff" fill-opacity="0.85"/><rect x="20" y="25" width="1" height="1" fill="#eeffff" fill-opacity="0.80"/><rect x="21" y="24" width="1" height="1" fill="#eeffff" fill-opacity="0.85"/><rect x="21" y="25" width="1" height="1" fill="#eeffff" fill-opacity="0.80"/><rect x="22" y="24" width="1" height="1" fill="#eeffff" fill-opacity="0.45"/><rect x="22" y="25" width="1" height="1" fill="#eeffff" fill-opacity="0.80"/><rect x="23" y="24" width="1" height="1" fill="#eeffff" fill-opacity="0.45"/><rect x="23" y="25" width="1" height="1" fill="#eeffff" fill-opacity="0.80"/><rect x="24" y="24" width="1" height="1" fill="#eeffff" fill-opacity="0.85"/><rect x="24" y="25" width="1" height="1" fill="#eeffff" fill-opacity="0.80"/><rect x="25" y="24" width="1" height="1" fill="#eeffff" fill-opacity="0.45"/><rect x="25" y="25" width="1" height="1" fill="#eeffff" fill-opacity="0.80"/><rect x="26" y="24" width="1" height="1" fill="#eeffff" fill-opacity="0.45"/><rect x="26" y="25" width="1" height="1" fill="#eeffff" fill-opacity="0.80"/><rect x="27" y="24" width="1" height="1" fill="#89ddff" fill-opacity="0.50"/><rect x="27" y="25" width="1" height="1" fill="#89ddff" fill-opacity="0.35"/><rect x="28" y="24" width="1" height="1" fill="#89ddff" fill-opacity="0.25"/><rect x="28" y="25" width="1" height="1" fill="#89ddff" fill-opacity="0.50"/><rect x="4" y="27" width="1" height="1" fill="#82aaff" fill-opacity="0.45"/><rect x="4" y="28" width="1" height="1" fill="#82aaff" fill-opacity="0.80"/><rect x="5" y="27" width="1" height="1" fill="#82aaff" fill-opacity="0.45"/><rect x="5" y="28" width="1" height="1" fill="#82aaff" fill-opacity="0.80"/><rect x="6" y="27" width="1" height="1" fill="#82aaff" fill-opacity="0.45"/><rect x="6" y="28" width="1" height="1" fill="#82aaff" fill-opacity="0.80"/><rect x="7" y="27" width="1" height="1" fill="#82aaff" fill-opacity="0.45"/><rect x="7" y="28" width="1" height="1" fill="#82aaff" fill-opacity="0.80"/><rect x="8" y="27" width="1" height="1" fill="#82aaff" fill-opacity="0.85"/><rect x="8" y="28" width="1" height="1" fill="#82aaff" fill-opacity="0.80"/><rect x="9" y="27" width="1" height="1" fill="#82aaff" fill-opacity="0.85"/><rect x="9" y="28" width="1" height="1" fill="#82aaff" fill-opacity="0.80"/><rect x="10" y="27" width="1" height="1" fill="#89ddff" fill-opacity="0.50"/><rect x="10" y="28" width="1" height="1" fill="#89ddff" fill-opacity="0.35"/><rect x="11" y="27" width="1" height="1" fill="#89ddff" fill-opacity="0.50"/><rect x="11" y="28" width="1" height="1" fill="#89ddff" fill-opacity="0.35"/><rect x="12" y="27" width="1" height="1" fill="#c3e88d" fill-opacity="0.85"/><rect x="12" y="28" width="1" height="1" fill="#c3e88d" fill-opacity="0.80"/><rect x="13" y="27" width="1" height="1" fill="#c3e88d" fill-opacity="0.45"/><rect x="13" y="28" width="1" height="1" fill="#c3e88d" fill-opacity="0.80"/><rect x="14" y="27" width="1" height="1" fill="#c3e88d" fill-opacity="0.85"/><rect x="14" y="28" width="1" height="1" fill="#c3e88d" fill-opacity="0.80"/><rect x="14" y="27" width="1" height="1" fill="#c3e88d" fill-opacity="0.45"/><rect x="14" y="28" width="1" height="1" fill="#c3e88d" fill-opacity="0.80"/><rect x="15" y="27" width="1" height="1" fill="#c3e88d" fill-opacity="0.45"/><rect x="15" y="28" width="1" height="1" fill="#c3e88d" fill-opacity="0.80"/><rect x="17" y="27" width="1" height="1" fill="#c3e88d" fill-opacity="0.85"/><rect x="17" y="28" width="1" height="1" fill="#c3e88d" fill-opacity="0.80"/><rect x="18" y="27" width="1" height="1" fill="#c3e88d" fill-opacity="0.85"/><rect x="18" y="28" width="1" height="1" fill="#c3e88d" fill-opacity="0.80"/><rect x="19" y="27" width="1" height="1" fill="#c3e88d" fill-opacity="0.45"/><rect x="19" y="28" width="1" height="1" fill="#c3e88d" fill-opacity="0.80"/><rect x="21" y="27" width="1" height="1" fill="#c3e88d" fill-opacity="0.45"/><rect x="21" y="28" width="1" height="1" fill="#c3e88d" fill-opacity="0.80"/><rect x="22" y="27" width="1" height="1" fill="#c3e88d" fill-opacity="0.45"/><rect x="22" y="28" width="1" height="1" fill="#c3e88d" fill-opacity="0.80"/><rect x="23" y="27" width="1" height="1" fill="#c3e88d" fill-opacity="0.45"/><rect x="23" y="28" width="1" height="1" fill="#c3e88d" fill-opacity="0.80"/><rect x="24" y="27" width="1" height="1" fill="#c3e88d" fill-opacity="0.45"/><rect x="24" y="28" width="1" height="1" fill="#c3e88d" fill-opacity="0.80"/><rect x="25" y="27" width="1" height="1" fill="#c3e88d" fill-opacity="0.45"/><rect x="25" y="28" width="1" height="1" fill="#c3e88d" fill-opacity="0.80"/><rect x="26" y="27" width="1" height="1" fill="#c3e88d" fill-opacity="0.85"/><rect x="26" y="28" width="1" height="1" fill="#c3e88d" fill-opacity="0.80"/><rect x="28" y="27" width="1" height="1" fill="#c3e88d" fill-opacity="0.45"/><rect x="28" y="28" width="1" height="1" fill="#c3e88d" fill-opacity="0.80"/><rect x="29" y="27" width="1" height="1" fill="#c3e88d" fill-opacity="0.45"/><rect x="29" y="28" width="1" height="1" fill="#c3e88d" fill-opacity="0.80"/><rect x="30" y="27" width="1" height="1" fill="#c3e88d" fill-opacity="0.45"/><rect x="30" y="28" width="1" height="1" fill="#c3e88d" fill-opacity="0.80"/><rect x="31" y="27" width="1" height="1" fill="#c3e88d" fill-opacity="0.85"/><rect x="31" y="28" width="1" height="1" fill="#c3e88d" fill-opacity="0.80"/><rect x="32" y="27" width="1" height="1" fill="#c3e88d" fill-opacity="0.45"/><rect x="32" y="28" width="1" height="1" fill="#c3e88d" fill-opacity="0.80"/><rect x="33" y="27" width="1" height="1" fill="#c3e88d" fill-opacity="0.45"/><rect x="33" y="28" width="1" height="1" fill="#c3e88d" fill-opacity="0.80"/><rect x="35" y="27" width="1" height="1" fill="#c3e88d" fill-opacity="0.25"/><rect x="35" y="28" width="1" height="1" fill="#c3e88d" fill-opacity="0.50"/><rect x="37" y="27" width="1" height="1" fill="#89ddff" fill-opacity="0.50"/><rect x="37" y="28" width="1" height="1" fill="#89ddff" fill-opacity="0.35"/><rect x="38" y="27" width="1" height="1" fill="#89ddff" fill-opacity="0.50"/><rect x="38" y="28" width="1" height="1" fill="#89ddff" fill-opacity="0.35"/><rect x="39" y="27" width="1" height="1" fill="#89ddff" fill-opacity="0.25"/><rect x="39" y="28" width="1" height="1" fill="#89ddff" fill-opacity="0.50"/><rect x="4" y="29" width="1" height="1" fill="#82aaff" fill-opacity="0.45"/><rect x="4" y="30" width="1" height="1" fill="#82aaff" fill-opacity="0.80"/><rect x="5" y="29" width="1" height="1" fill="#82aaff" fill-opacity="0.45"/><rect x="5" y="30" width="1" height="1" fill="#82aaff" fill-opacity="0.80"/><rect x="6" y="29" width="1" height="1" fill="#82aaff" fill-opacity="0.45"/><rect x="6" y="30" width="1" height="1" fill="#82aaff" fill-opacity="0.80"/><rect x="7" y="29" width="1" height="1" fill="#82aaff" fill-opacity="0.45"/><rect x="7" y="30" width="1" height="1" fill="#82aaff" fill-opacity="0.80"/><rect x="8" y="29" width="1" height="1" fill="#82aaff" fill-opacity="0.85"/><rect x="8" y="30" width="1" height="1" fill="#82aaff" fill-opacity="0.80"/><rect x="9" y="29" width="1" height="1" fill="#89ddff" fill-opacity="0.50"/><rect x="9" y="30" width="1" height="1" fill="#89ddff" fill-opacity="0.35"/><rect x="10" y="29" width="1" height="1" fill="#89ddff" fill-opacity="0.50"/><rect x="10" y="30" width="1" height="1" fill="#89ddff" fill-opacity="0.35"/><rect x="11" y="29" width="1" height="1" fill="#e0ecee" fill-opacity="0.50"/><rect x="11" y="30" width="1" height="1" fill="#e0ecee" fill-opacity="0.35"/><rect x="12" y="29" width="1" height="1" fill="#e0ecee" fill-opacity="0.85"/><rect x="12" y="30" width="1" height="1" fill="#e0ecee" fill-opacity="0.80"/><rect x="13" y="29" width="1" height="1" fill="#89ddff" fill-opacity="0.50"/><rect x="13" y="30" width="1" height="1" fill="#89ddff" fill-opacity="0.35"/><rect x="14" y="29" width="1" height="1" fill="#89ddff" fill-opacity="0.25"/><rect x="14" y="30" width="1" height="1" fill="#89ddff" fill-opacity="0.50"/><rect x="15" y="29" width="1" height="1" fill="#c792ea" fill-opacity="0.50"/><rect x="15" y="30" width="1" height="1" fill="#c792ea" fill-opacity="0.35"/><rect x="16" y="29" width="1" height="1" fill="#eeffff" fill-opacity="0.45"/><rect x="16" y="30" width="1" height="1" fill="#eeffff" fill-opacity="0.80"/><rect x="17" y="29" width="1" height="1" fill="#eeffff" fill-opacity="0.45"/><rect x="17" y="30" width="1" height="1" fill="#eeffff" fill-opacity="0.80"/><rect x="18" y="29" width="1" height="1" fill="#eeffff" fill-opacity="0.85"/><rect x="18" y="30" width="1" height="1" fill="#eeffff" fill-opacity="0.80"/><rect x="19" y="29" width="1" height="1" fill="#eeffff" fill-opacity="0.85"/><rect x="19" y="30" width="1" height="1" fill="#eeffff" fill-opacity="0.80"/><rect x="20" y="29" width="1" height="1" fill="#eeffff" fill-opacity="0.45"/><rect x="20" y="30" width="1" height="1" fill="#eeffff" fill-opacity="0.80"/><rect x="21" y="29" width="1" height="1" fill="#eeffff" fill-opacity="0.45"/><rect x="21" y="30" width="1" height="1" fill="#eeffff" fill-opacity="0.80"/><rect x="22" y="29" width="1" height="1" fill="#eeffff" fill-opacity="0.85"/><rect x="22" y="30" width="1" height="1" fill="#eeffff" fill-opacity="0.80"/><rect x="23" y="29" width="1" height="1" fill="#eeffff" fill-opacity="0.45"/><rect x="23" y="30" width="1" height="1" fill="#eeffff" fill-opacity="0.80"/><rect x="24" y="29" width="1" height="1" fill="#eeffff" fill-opacity="0.45"/><rect x="24" y="30" width="1" height="1" fill="#eeffff" fill-opacity="0.80"/><rect x="25" y="29" width="1" height="1" fill="#89ddff" fill-opacity="0.50"/><rect x="25" y="30" width="1" height="1" fill="#89ddff" fill-opacity="0.35"/><rect x="26" y="29" width="1" height="1" fill="#89ddff" fill-opacity="0.25"/><rect x="26" y="30" width="1" height="1" fill="#89ddff" fill-opacity="0.50"/><rect x="4" y="33" width="1" height="1" fill="#82aaff" fill-opacity="0.45"/><rect x="4" y="34" width="1" height="1" fill="#82aaff" fill-opacity="0.80"/><rect x="5" y="33" width="1" height="1" fill="#82aaff" fill-opacity="0.45"/><rect x="5" y="34" width="1" height="1" fill="#82aaff" fill-opacity="0.80"/><rect x="6" y="33" width="1" height="1" fill="#82aaff" fill-opacity="0.45"/><rect x="6" y="34" width="1" height="1" fill="#82aaff" fill-opacity="0.80"/><rect x="7" y="33" width="1" height="1" fill="#82aaff" fill-opacity="0.45"/><rect x="7" y="34" width="1" height="1" fill="#82aaff" fill-opacity="0.80"/><rect x="8" y="33" width="1" height="1" fill="#82aaff" fill-opacity="0.85"/><rect x="8" y="34" width="1" height="1" fill="#82aaff" fill-opacity="0.80"/><rect x="9" y="33" width="1" height="1" fill="#82aaff" fill-opacity="0.85"/><rect x="9" y="34" width="1" height="1" fill="#82aaff" fill-opacity="0.80"/><rect x="10" y="33" width="1" height="1" fill="#89ddff" fill-opacity="0.50"/><rect x="10" y="34" width="1" height="1" fill="#89ddff" fill-opacity="0.35"/><rect x="11" y="33" width="1" height="1" fill="#89ddff" fill-opacity="0.50"/><rect x="11" y="34" width="1" height="1" fill="#89ddff" fill-opacity="0.35"/><rect x="12" y="33" width="1" height="1" fill="#c3e88d" fill-opacity="0.85"/><rect x="12" y="34" width="1" height="1" fill="#c3e88d" fill-opacity="0.80"/><rect x="13" y="33" width="1" height="1" fill="#c3e88d" fill-opacity="0.45"/><rect x="13" y="34" width="1" height="1" fill="#c3e88d" fill-opacity="0.80"/><rect x="14" y="33" width="1" height="1" fill="#c3e88d" fill-opacity="0.85"/><rect x="14" y="34" width="1" height="1" fill="#c3e88d" fill-opacity="0.80"/><rect x="14" y="33" width="1" height="1" fill="#c3e88d" fill-opacity="0.45"/><rect x="14" y="34" width="1" height="1" fill="#c3e88d" fill-opacity="0.80"/><rect x="15" y="33" width="1" height="1" fill="#c3e88d" fill-opacity="0.45"/><rect x="15" y="34" width="1" height="1" fill="#c3e88d" fill-opacity="0.80"/><rect x="16" y="33" width="1" height="1" fill="#c3e88d" fill-opacity="0.85"/><rect x="16" y="34" width="1" height="1" fill="#c3e88d" fill-opacity="0.80"/><rect x="17" y="33" width="1" height="1" fill="#c3e88d" fill-opacity="0.45"/><rect x="17" y="34" width="1" height="1" fill="#c3e88d" fill-opacity="0.80"/><rect x="18" y="33" width="1" height="1" fill="#c3e88d" fill-opacity="0.45"/><rect x="18" y="34" width="1" height="1" fill="#c3e88d" fill-opacity="0.80"/><rect x="19" y="33" width="1" height="1" fill="#c3e88d" fill-opacity="0.45"/><rect x="19" y="34" width="1" height="1" fill="#c3e88d" fill-opacity="0.80"/><rect x="20" y="33" width="1" height="1" fill="#c3e88d" fill-opacity="0.45"/><rect x="20" y="34" width="1" height="1" fill="#c3e88d" fill-opacity="0.80"/><rect x="22" y="33" width="1" height="1" fill="#c3e88d" fill-opacity="0.45"/><rect x="22" y="34" width="1" height="1" fill="#c3e88d" fill-opacity="0.80"/><rect x="23" y="33" width="1" height="1" fill="#c3e88d" fill-opacity="0.45"/><rect x="23" y="34" width="1" height="1" fill="#c3e88d" fill-opacity="0.80"/><rect x="24" y="33" width="1" height="1" fill="#c3e88d" fill-opacity="0.45"/><rect x="24" y="34" width="1" height="1" fill="#c3e88d" fill-opacity="0.80"/><rect x="25" y="33" width="1" height="1" fill="#c3e88d" fill-opacity="0.85"/><rect x="25" y="34" width="1" height="1" fill="#c3e88d" fill-opacity="0.80"/><rect x="26" y="33" width="1" height="1" fill="#c3e88d" fill-opacity="0.45"/><rect x="26" y="34" width="1" height="1" fill="#c3e88d" fill-opacity="0.80"/><rect x="27" y="33" width="1" height="1" fill="#c3e88d" fill-opacity="0.45"/><rect x="27" y="34" width="1" height="1" fill="#c3e88d" fill-opacity="0.80"/><rect x="29" y="33" width="1" height="1" fill="#c3e88d" fill-opacity="0.85"/><rect x="29" y="34" width="1" height="1" fill="#c3e88d" fill-opacity="0.80"/><rect x="30" y="33" width="1" height="1" fill="#c3e88d" fill-opacity="0.45"/><rect x="30" y="34" width="1" height="1" fill="#c3e88d" fill-opacity="0.80"/><rect x="31" y="33" width="1" height="1" fill="#c3e88d" fill-opacity="0.85"/><rect x="31" y="34" width="1" height="1" fill="#c3e88d" fill-opacity="0.80"/><rect x="32" y="33" width="1" height="1" fill="#c3e88d" fill-opacity="0.45"/><rect x="32" y="34" width="1" height="1" fill="#c3e88d" fill-opacity="0.80"/><rect x="33" y="33" width="1" height="1" fill="#c3e88d" fill-opacity="0.45"/><rect x="33" y="34" width="1" height="1" fill="#c3e88d" fill-opacity="0.80"/><rect x="34" y="33" width="1" height="1" fill="#c3e88d" fill-opacity="0.45"/><rect x="34" y="34" width="1" height="1" fill="#c3e88d" fill-opacity="0.80"/><rect x="35" y="33" width="1" height="1" fill="#c3e88d" fill-opacity="0.45"/><rect x="35" y="34" width="1" height="1" fill="#c3e88d" fill-opacity="0.80"/><rect x="37" y="33" width="1" height="1" fill="#e0ecee" fill-opacity="0.50"/><rect x="37" y="34" width="1" height="1" fill="#e0ecee" fill-opacity="0.35"/><rect x="38" y="33" width="1" height="1" fill="#e0ecee" fill-opacity="0.85"/><rect x="38" y="34" width="1" height="1" fill="#e0ecee" fill-opacity="0.80"/><rect x="40" y="33" width="1" height="1" fill="#c3e88d" fill-opacity="0.45"/><rect x="40" y="34" width="1" height="1" fill="#c3e88d" fill-opacity="0.80"/><rect x="41" y="33" width="1" height="1" fill="#c3e88d" fill-opacity="0.45"/><rect x="41" y="34" width="1" height="1" fill="#c3e88d" fill-opacity="0.80"/><rect x="41" y="33" width="1" height="1" fill="#c3e88d" fill-opacity="0.85"/><rect x="41" y="34" width="1" height="1" fill="#c3e88d" fill-opacity="0.80"/><rect x="43" y="33" width="1" height="1" fill="#e0ecee" fill-opacity="0.50"/><rect x="43" y="34" width="1" height="1" fill="#e0ecee" fill-opacity="0.35"/><rect x="44" y="33" width="1" height="1" fill="#e0ecee" fill-opacity="0.85"/><rect x="44" y="34" width="1" height="1" fill="#e0ecee" fill-opacity="0.80"/><rect x="46" y="33" width="1" height="1" fill="#c3e88d" fill-opacity="0.45"/><rect x="46" y="34" width="1" height="1" fill="#c3e88d" fill-opacity="0.80"/><rect x="47" y="33" width="1" height="1" fill="#c3e88d" fill-opacity="0.45"/><rect x="47" y="34" width="1" height="1" fill="#c3e88d" fill-opacity="0.80"/><rect x="48" y="33" width="1" height="1" fill="#c3e88d" fill-opacity="0.45"/><rect x="48" y="34" width="1" height="1" fill="#c3e88d" fill-opacity="0.80"/><rect x="50" y="33" width="1" height="1" fill="#c3e88d" fill-opacity="0.25"/><rect x="50" y="34" width="1" height="1" fill="#c3e88d" fill-opacity="0.50"/><rect x="52" y="33" width="1" height="1" fill="#89ddff" fill-opacity="0.50"/><rect x="52" y="34" width="1" height="1" fill="#89ddff" fill-opacity="0.35"/><rect x="53" y="33" width="1" height="1" fill="#89ddff" fill-opacity="0.45"/><rect x="53" y="34" width="1" height="1" fill="#89ddff" fill-opacity="0.80"/><rect x="54" y="33" width="1" height="1" fill="#89ddff" fill-opacity="0.50"/><rect x="54" y="34" width="1" height="1" fill="#89ddff" fill-opacity="0.35"/><rect x="55" y="33" width="1" height="1" fill="#89ddff" fill-opacity="0.25"/><rect x="55" y="34" width="1" height="1" fill="#89ddff" fill-opacity="0.50"/><rect x="57" y="33" width="1" height="1" fill="#eeffff" fill-opacity="0.45"/><rect x="57" y="34" width="1" height="1" fill="#eeffff" fill-opacity="0.80"/><rect x="58" y="33" width="1" height="1" fill="#eeffff" fill-opacity="0.85"/><rect x="58" y="34" width="1" height="1" fill="#eeffff" fill-opacity="0.80"/><rect x="59" y="33" width="1" height="1" fill="#eeffff" fill-opacity="0.45"/><rect x="59" y="34" width="1" height="1" fill="#eeffff" fill-opacity="0.80"/><rect x="60" y="33" width="1" height="1" fill="#eeffff" fill-opacity="0.45"/><rect x="60" y="34" width="1" height="1" fill="#eeffff" fill-opacity="0.80"/><rect x="61" y="33" width="1" height="1" fill="#eeffff" fill-opacity="0.85"/><rect x="61" y="34" width="1" height="1" fill="#eeffff" fill-opacity="0.80"/><rect x="62" y="33" width="1" height="1" fill="#eeffff" fill-opacity="0.85"/><rect x="62" y="34" width="1" height="1" fill="#eeffff" fill-opacity="0.80"/><rect x="63" y="33" width="1" height="1" fill="#eeffff" fill-opacity="0.45"/><rect x="63" y="34" width="1" height="1" fill="#eeffff" fill-opacity="0.80"/><rect x="64" y="33" width="1" height="1" fill="#eeffff" fill-opacity="0.45"/><rect x="64" y="34" width="1" height="1" fill="#eeffff" fill-opacity="0.80"/><rect x="65" y="33" width="1" height="1" fill="#eeffff" fill-opacity="0.85"/><rect x="65" y="34" width="1" height="1" fill="#eeffff" fill-opacity="0.80"/><rect x="66" y="33" width="1" height="1" fill="#eeffff" fill-opacity="0.45"/><rect x="66" y="34" width="1" height="1" fill="#eeffff" fill-opacity="0.80"/><rect x="67" y="33" width="1" height="1" fill="#eeffff" fill-opacity="0.45"/><rect x="67" y="34" width="1" height="1" fill="#eeffff" fill-opacity="0.80"/><rect x="68" y="33" width="1" height="1" fill="#89ddff" fill-opacity="0.25"/><rect x="68" y="34" width="1" height="1" fill="#89ddff" fill-opacity="0.50"/><rect x="69" y="33" width="1" height="1" fill="#eeffff" fill-opacity="0.45"/><rect x="69" y="34" width="1" height="1" fill="#eeffff" fill-opacity="0.80"/><rect x="70" y="33" width="1" height="1" fill="#eeffff" fill-opacity="0.45"/><rect x="70" y="34" width="1" height="1" fill="#eeffff" fill-opacity="0.80"/><rect x="71" y="33" width="1" height="1" fill="#eeffff" fill-opacity="0.85"/><rect x="71" y="34" width="1" height="1" fill="#eeffff" fill-opacity="0.80"/><rect x="72" y="33" width="1" height="1" fill="#eeffff" fill-opacity="0.85"/><rect x="72" y="34" width="1" height="1" fill="#eeffff" fill-opacity="0.80"/><rect x="73" y="33" width="1" height="1" fill="#eeffff" fill-opacity="0.45"/><rect x="73" y="34" width="1" height="1" fill="#eeffff" fill-opacity="0.80"/><rect x="74" y="33" width="1" height="1" fill="#eeffff" fill-opacity="0.45"/><rect x="74" y="34" width="1" height="1" fill="#eeffff" fill-opacity="0.80"/><rect x="75" y="33" width="1" height="1" fill="#eeffff" fill-opacity="0.85"/><rect x="75" y="34" width="1" height="1" fill="#eeffff" fill-opacity="0.80"/><rect x="76" y="33" width="1" height="1" fill="#eeffff" fill-opacity="0.45"/><rect x="76" y="34" width="1" height="1" fill="#eeffff" fill-opacity="0.80"/><rect x="77" y="33" width="1" height="1" fill="#eeffff" fill-opacity="0.45"/><rect x="77" y="34" width="1" height="1" fill="#eeffff" fill-opacity="0.80"/><rect x="78" y="33" width="1" height="1" fill="#89ddff" fill-opacity="0.50"/><rect x="78" y="34" width="1" height="1" fill="#89ddff" fill-opacity="0.35"/><rect x="79" y="33" width="1" height="1" fill="#89ddff" fill-opacity="0.25"/><rect x="79" y="34" width="1" height="1" fill="#89ddff" fill-opacity="0.50"/><rect x="4" y="37" width="1" height="1" fill="#89ddff" fill-opacity="0.85"/><rect x="4" y="38" width="1" height="1" fill="#89ddff" fill-opacity="0.80"/><rect x="5" y="37" width="1" height="1" fill="#89ddff" fill-opacity="0.45"/><rect x="5" y="38" width="1" height="1" fill="#89ddff" fill-opacity="0.80"/><rect x="6" y="37" width="1" height="1" fill="#89ddff" fill-opacity="0.45"/><rect x="6" y="38" width="1" height="1" fill="#89ddff" fill-opacity="0.80"/><rect x="8" y="37" width="1" height="1" fill="#89ddff" fill-opacity="0.50"/><rect x="8" y="38" width="1" height="1" fill="#89ddff" fill-opacity="0.35"/><rect x="9" y="37" width="1" height="1" fill="#eeffff" fill-opacity="0.45"/><rect x="9" y="38" width="1" height="1" fill="#eeffff" fill-opacity="0.80"/><rect x="11" y="37" width="1" height="1" fill="#c792ea" fill-opacity="0.50"/><rect x="11" y="38" width="1" height="1" fill="#c792ea" fill-opacity="0.35"/><rect x="13" y="37" width="1" height="1" fill="#eeffff" fill-opacity="0.45"/><rect x="13" y="38" width="1" height="1" fill="#eeffff" fill-opacity="0.80"/><rect x="14" y="37" width="1" height="1" fill="#eeffff" fill-opacity="0.85"/><rect x="14" y="38" width="1" height="1" fill="#eeffff" fill-opacity="0.80"/><rect x="14" y="37" width="1" height="1" fill="#eeffff" fill-opacity="0.45"/><rect x="14" y="38" width="1" height="1" fill="#eeffff" fill-opacity="0.80"/><rect x="15" y="37" width="1" height="1" fill="#eeffff" fill-opacity="0.45"/><rect x="15" y="38" width="1" height="1" fill="#eeffff" fill-opacity="0.80"/><rect x="16" y="37" width="1" height="1" fill="#eeffff" fill-opacity="0.85"/><rect x="16" y="38" width="1" height="1" fill="#eeffff" fill-opacity="0.80"/><rect x="17" y="37" width="1" height="1" fill="#eeffff" fill-opacity="0.85"/><rect x="17" y="38" width="1" height="1" fill="#eeffff" fill-opacity="0.80"/><rect x="18" y="37" width="1" height="1" fill="#eeffff" fill-opacity="0.45"/><rect x="18" y="38" width="1" height="1" fill="#eeffff" fill-opacity="0.80"/><rect x="19" y="37" width="1" height="1" fill="#eeffff" fill-opacity="0.45"/><rect x="19" y="38" width="1" height="1" fill="#eeffff" fill-opacity="0.80"/><rect x="20" y="37" width="1" height="1" fill="#eeffff" fill-opacity="0.85"/><rect x="20" y="38" width="1" height="1" fill="#eeffff" fill-opacity="0.80"/><rect x="21" y="37" width="1" height="1" fill="#eeffff" fill-opacity="0.45"/><rect x="21" y="38" width="1" height="1" fill="#eeffff" fill-opacity="0.80"/><rect x="22" y="37" width="1" height="1" fill="#eeffff" fill-opacity="0.45"/><rect x="22" y="38" width="1" height="1" fill="#eeffff" fill-opacity="0.80"/><rect x="23" y="37" width="1" height="1" fill="#89ddff" fill-opacity="0.25"/><rect x="23" y="38" width="1" height="1" fill="#89ddff" fill-opacity="0.50"/><rect x="25" y="37" width="1" height="1" fill="#eeffff" fill-opacity="0.45"/><rect x="25" y="38" width="1" height="1" fill="#eeffff" fill-opacity="0.80"/><rect x="27" y="37" width="1" height="1" fill="#c792ea" fill-opacity="0.50"/><rect x="27" y="38" width="1" height="1" fill="#c792ea" fill-opacity="0.35"/><rect x="28" y="37" width="1" height="1" fill="#c792ea" fill-opacity="0.50"/><rect x="28" y="38" width="1" height="1" fill="#c792ea" fill-opacity="0.35"/><rect x="30" y="37" width="1" height="1" fill="#eeffff" fill-opacity="0.45"/><rect x="30" y="38" width="1" height="1" fill="#eeffff" fill-opacity="0.80"/><rect x="31" y="37" width="1" height="1" fill="#eeffff" fill-opacity="0.45"/><rect x="31" y="38" width="1" height="1" fill="#eeffff" fill-opacity="0.80"/><rect x="32" y="37" width="1" height="1" fill="#eeffff" fill-opacity="0.85"/><rect x="32" y="38" width="1" height="1" fill="#eeffff" fill-opacity="0.80"/><rect x="33" y="37" width="1" height="1" fill="#eeffff" fill-opacity="0.85"/><rect x="33" y="38" width="1" height="1" fill="#eeffff" fill-opacity="0.80"/><rect x="34" y="37" width="1" height="1" fill="#eeffff" fill-opacity="0.45"/><rect x="34" y="38" width="1" height="1" fill="#eeffff" fill-opacity="0.80"/><rect x="35" y="37" width="1" height="1" fill="#eeffff" fill-opacity="0.45"/><rect x="35" y="38" width="1" height="1" fill="#eeffff" fill-opacity="0.80"/><rect x="36" y="37" width="1" height="1" fill="#eeffff" fill-opacity="0.85"/><rect x="36" y="38" width="1" height="1" fill="#eeffff" fill-opacity="0.80"/><rect x="37" y="37" width="1" height="1" fill="#eeffff" fill-opacity="0.45"/><rect x="37" y="38" width="1" height="1" fill="#eeffff" fill-opacity="0.80"/><rect x="38" y="37" width="1" height="1" fill="#eeffff" fill-opacity="0.45"/><rect x="38" y="38" width="1" height="1" fill="#eeffff" fill-opacity="0.80"/><rect x="39" y="37" width="1" height="1" fill="#89ddff" fill-opacity="0.25"/><rect x="39" y="38" width="1" height="1" fill="#89ddff" fill-opacity="0.50"/><rect x="41" y="37" width="1" height="1" fill="#eeffff" fill-opacity="0.45"/><rect x="41" y="38" width="1" height="1" fill="#eeffff" fill-opacity="0.80"/><rect x="41" y="37" width="1" height="1" fill="#c792ea" fill-opacity="0.50"/><rect x="41" y="38" width="1" height="1" fill="#c792ea" fill-opacity="0.35"/><rect x="42" y="37" width="1" height="1" fill="#c792ea" fill-opacity="0.50"/><rect x="42" y="38" width="1" height="1" fill="#c792ea" fill-opacity="0.35"/><rect x="43" y="37" width="1" height="1" fill="#89ddff" fill-opacity="0.50"/><rect x="43" y="38" width="1" height="1" fill="#89ddff" fill-opacity="0.35"/><rect x="4" y="39" width="1" height="1" fill="#89ddff" fill-opacity="0.50"/><rect x="4" y="40" width="1" height="1" fill="#89ddff" fill-opacity="0.35"/><rect x="8" y="41" width="1" height="1" fill="#eeffff" fill-opacity="0.45"/><rect x="8" y="42" width="1" height="1" fill="#eeffff" fill-opacity="0.80"/><rect x="9" y="41" width="1" height="1" fill="#eeffff" fill-opacity="0.45"/><rect x="9" y="42" width="1" height="1" fill="#eeffff" fill-opacity="0.80"/><rect x="10" y="41" width="1" height="1" fill="#eeffff" fill-opacity="0.45"/><rect x="10" y="42" width="1" height="1" fill="#eeffff" fill-opacity="0.80"/><rect x="11" y="41" width="1" height="1" fill="#eeffff" fill-opacity="0.45"/><rect x="11" y="42" width="1" height="1" fill="#eeffff" fill-opacity="0.80"/><rect x="12" y="41" width="1" height="1" fill="#eeffff" fill-opacity="0.45"/><rect x="12" y="42" width="1" height="1" fill="#eeffff" fill-opacity="0.80"/><rect x="13" y="41" width="1" height="1" fill="#eeffff" fill-opacity="0.45"/><rect x="13" y="42" width="1" height="1" fill="#eeffff" fill-opacity="0.80"/><rect x="14" y="41" width="1" height="1" fill="#eeffff" fill-opacity="0.85"/><rect x="14" y="42" width="1" height="1" fill="#eeffff" fill-opacity="0.80"/><rect x="14" y="41" width="1" height="1" fill="#eeffff" fill-opacity="0.85"/><rect x="14" y="42" width="1" height="1" fill="#eeffff" fill-opacity="0.80"/><rect x="15" y="41" width="1" height="1" fill="#eeffff" fill-opacity="0.45"/><rect x="15" y="42" width="1" height="1" fill="#eeffff" fill-opacity="0.80"/><rect x="16" y="41" width="1" height="1" fill="#eeffff" fill-opacity="0.45"/><rect x="16" y="42" width="1" height="1" fill="#eeffff" fill-opacity="0.80"/><rect x="17" y="41" width="1" height="1" fill="#eeffff" fill-opacity="0.85"/><rect x="17" y="42" width="1" height="1" fill="#eeffff" fill-opacity="0.80"/><rect x="18" y="41" width="1" height="1" fill="#eeffff" fill-opacity="0.45"/><rect x="18" y="42" width="1" height="1" fill="#eeffff" fill-opacity="0.80"/><rect x="19" y="41" width="1" height="1" fill="#eeffff" fill-opacity="0.45"/><rect x="19" y="42" width="1" height="1" fill="#eeffff" fill-opacity="0.80"/><rect x="21" y="41" width="1" height="1" fill="#c792ea" fill-opacity="0.50"/><rect x="21" y="42" width="1" height="1" fill="#c792ea" fill-opacity="0.35"/><rect x="23" y="41" width="1" height="1" fill="#eeffff" fill-opacity="0.45"/><rect x="23" y="42" width="1" height="1" fill="#eeffff" fill-opacity="0.80"/><rect x="24" y="41" width="1" height="1" fill="#89ddff" fill-opacity="0.25"/><rect x="24" y="42" width="1" height="1" fill="#89ddff" fill-opacity="0.50"/><rect x="8" y="43" width="1" height="1" fill="#eeffff" fill-opacity="0.45"/><rect x="8" y="44" width="1" height="1" fill="#eeffff" fill-opacity="0.80"/><rect x="9" y="43" width="1" height="1" fill="#eeffff" fill-opacity="0.45"/><rect x="9" y="44" width="1" height="1" fill="#eeffff" fill-opacity="0.80"/><rect x="10" y="43" width="1" height="1" fill="#eeffff" fill-opacity="0.45"/><rect x="10" y="44" width="1" height="1" fill="#eeffff" fill-opacity="0.80"/><rect x="11" y="43" width="1" height="1" fill="#eeffff" fill-opacity="0.45"/><rect x="11" y="44" width="1" height="1" fill="#eeffff" fill-opacity="0.80"/><rect x="12" y="43" width="1" height="1" fill="#eeffff" fill-opacity="0.45"/><rect x="12" y="44" width="1" height="1" fill="#eeffff" fill-opacity="0.80"/><rect x="13" y="43" width="1" height="1" fill="#eeffff" fill-opacity="0.45"/><rect x="13" y="44" width="1" height="1" fill="#eeffff" fill-opacity="0.80"/><rect x="14" y="43" width="1" height="1" fill="#eeffff" fill-opacity="0.45"/><rect x="14" y="44" width="1" height="1" fill="#eeffff" fill-opacity="0.80"/><rect x="14" y="43" width="1" height="1" fill="#eeffff" fill-opacity="0.85"/><rect x="14" y="44" width="1" height="1" fill="#eeffff" fill-opacity="0.80"/><rect x="15" y="43" width="1" height="1" fill="#eeffff" fill-opacity="0.85"/><rect x="15" y="44" width="1" height="1" fill="#eeffff" fill-opacity="0.80"/><rect x="16" y="43" width="1" height="1" fill="#eeffff" fill-opacity="0.45"/><rect x="16" y="44" width="1" height="1" fill="#eeffff" fill-opacity="0.80"/><rect x="17" y="43" width="1" height="1" fill="#eeffff" fill-opacity="0.45"/><rect x="17" y="44" width="1" height="1" fill="#eeffff" fill-opacity="0.80"/><rect x="18" y="43" width="1" height="1" fill="#eeffff" fill-opacity="0.85"/><rect x="18" y="44" width="1" height="1" fill="#eeffff" fill-opacity="0.80"/><rect x="19" y="43" width="1" height="1" fill="#eeffff" fill-opacity="0.45"/><rect x="19" y="44" width="1" height="1" fill="#eeffff" fill-opacity="0.80"/><rect x="20" y="43" width="1" height="1" fill="#eeffff" fill-opacity="0.45"/><rect x="20" y="44" width="1" height="1" fill="#eeffff" fill-opacity="0.80"/><rect x="22" y="43" width="1" height="1" fill="#c792ea" fill-opacity="0.50"/><rect x="22" y="44" width="1" height="1" fill="#c792ea" fill-opacity="0.35"/><rect x="24" y="43" width="1" height="1" fill="#f78c6c" fill-opacity="0.85"/><rect x="24" y="44" width="1" height="1" fill="#f78c6c" fill-opacity="0.80"/><rect x="25" y="43" width="1" height="1" fill="#89ddff" fill-opacity="0.25"/><rect x="25" y="44" width="1" height="1" fill="#89ddff" fill-opacity="0.50"/><rect x="8" y="47" width="1" height="1" fill="#89ddff" fill-opacity="0.45"/><rect x="8" y="48" width="1" height="1" fill="#89ddff" fill-opacity="0.80"/><rect x="9" y="47" width="1" height="1" fill="#89ddff" fill-opacity="0.85"/><rect x="9" y="48" width="1" height="1" fill="#89ddff" fill-opacity="0.80"/><rect x="10" y="47" width="1" height="1" fill="#89ddff" fill-opacity="0.45"/><rect x="10" y="48" width="1" height="1" fill="#89ddff" fill-opacity="0.80"/><rect x="11" y="47" width="1" height="1" fill="#89ddff" fill-opacity="0.85"/><rect x="11" y="48" width="1" height="1" fill="#89ddff" fill-opacity="0.80"/><rect x="12" y="47" width="1" height="1" fill="#89ddff" fill-opacity="0.45"/><rect x="12" y="48" width="1" height="1" fill="#89ddff" fill-opacity="0.80"/><rect x="14" y="47" width="1" height="1" fill="#89ddff" fill-opacity="0.50"/><rect x="14" y="48" width="1" height="1" fill="#89ddff" fill-opacity="0.35"/><rect x="14" y="47" width="1" height="1" fill="#eeffff" fill-opacity="0.45"/><rect x="14" y="48" width="1" height="1" fill="#eeffff" fill-opacity="0.80"/><rect x="15" y="47" width="1" height="1" fill="#eeffff" fill-opacity="0.45"/><rect x="15" y="48" width="1" height="1" fill="#eeffff" fill-opacity="0.80"/><rect x="16" y="47" width="1" height="1" fill="#eeffff" fill-opacity="0.45"/><rect x="16" y="48" width="1" height="1" fill="#eeffff" fill-opacity="0.80"/><rect x="17" y="47" width="1" height="1" fill="#eeffff" fill-opacity="0.45"/><rect x="17" y="48" width="1" height="1" fill="#eeffff" fill-opacity="0.80"/><rect x="18" y="47" width="1" height="1" fill="#eeffff" fill-opacity="0.45"/><rect x="18" y="48" width="1" height="1" fill="#eeffff" fill-opacity="0.80"/><rect x="19" y="47" width="1" height="1" fill="#eeffff" fill-opacity="0.45"/><rect x="19" y="48" width="1" height="1" fill="#eeffff" fill-opacity="0.80"/><rect x="20" y="47" width="1" height="1" fill="#eeffff" fill-opacity="0.85"/><rect x="20" y="48" width="1" height="1" fill="#eeffff" fill-opacity="0.80"/><rect x="21" y="47" width="1" height="1" fill="#eeffff" fill-opacity="0.85"/><rect x="21" y="48" width="1" height="1" fill="#eeffff" fill-opacity="0.80"/><rect x="22" y="47" width="1" height="1" fill="#eeffff" fill-opacity="0.45"/><rect x="22" y="48" width="1" height="1" fill="#eeffff" fill-opacity="0.80"/><rect x="23" y="47" width="1" height="1" fill="#eeffff" fill-opacity="0.45"/><rect x="23" y="48" width="1" height="1" fill="#eeffff" fill-opacity="0.80"/><rect x="24" y="47" width="1" height="1" fill="#eeffff" fill-opacity="0.85"/><rect x="24" y="48" width="1" height="1" fill="#eeffff" fill-opacity="0.80"/><rect x="25" y="47" width="1" height="1" fill="#eeffff" fill-opacity="0.45"/><rect x="25" y="48" width="1" height="1" fill="#eeffff" fill-opacity="0.80"/><rect x="26" y="47" width="1" height="1" fill="#eeffff" fill-opacity="0.45"/><rect x="26" y="48" width="1" height="1" fill="#eeffff" fill-opacity="0.80"/><rect x="27" y="47" width="1" height="1" fill="#89ddff" fill-opacity="0.50"/><rect x="27" y="48" width="1" height="1" fill="#89ddff" fill-opacity="0.35"/><rect x="8" y="49" width="1" height="1" fill="#89ddff" fill-opacity="0.50"/><rect x="8" y="50" width="1" height="1" fill="#89ddff" fill-opacity="0.35"/><rect x="12" y="51" width="1" height="1" fill="#eeffff" fill-opacity="0.45"/><rect x="12" y="52" width="1" height="1" fill="#eeffff" fill-opacity="0.80"/><rect x="13" y="51" width="1" height="1" fill="#eeffff" fill-opacity="0.45"/><rect x="13" y="52" width="1" height="1" fill="#eeffff" fill-opacity="0.80"/><rect x="14" y="51" width="1" height="1" fill="#eeffff" fill-opacity="0.45"/><rect x="14" y="52" width="1" height="1" fill="#eeffff" fill-opacity="0.80"/><rect x="15" y="51" width="1" height="1" fill="#c792ea" fill-opacity="0.50"/><rect x="15" y="52" width="1" height="1" fill="#c792ea" fill-opacity="0.35"/><rect x="17" y="51" width="1" height="1" fill="#eeffff" fill-opacity="0.45"/><rect x="17" y="52" width="1" height="1" fill="#eeffff" fill-opacity="0.80"/><rect x="18" y="51" width="1" height="1" fill="#eeffff" fill-opacity="0.45"/><rect x="18" y="52" width="1" height="1" fill="#eeffff" fill-opacity="0.80"/><rect x="19" y="51" width="1" height="1" fill="#eeffff" fill-opacity="0.45"/><rect x="19" y="52" width="1" height="1" fill="#eeffff" fill-opacity="0.80"/><rect x="20" y="51" width="1" height="1" fill="#eeffff" fill-opacity="0.45"/><rect x="20" y="52" width="1" height="1" fill="#eeffff" fill-opacity="0.80"/><rect x="21" y="51" width="1" height="1" fill="#eeffff" fill-opacity="0.45"/><rect x="21" y="52" width="1" height="1" fill="#eeffff" fill-opacity="0.80"/><rect x="22" y="51" width="1" height="1" fill="#eeffff" fill-opacity="0.45"/><rect x="22" y="52" width="1" height="1" fill="#eeffff" fill-opacity="0.80"/><rect x="23" y="51" width="1" height="1" fill="#eeffff" fill-opacity="0.85"/><rect x="23" y="52" width="1" height="1" fill="#eeffff" fill-opacity="0.80"/><rect x="24" y="51" width="1" height="1" fill="#eeffff" fill-opacity="0.85"/><rect x="24" y="52" width="1" height="1" fill="#eeffff" fill-opacity="0.80"/><rect x="25" y="51" width="1" height="1" fill="#eeffff" fill-opacity="0.45"/><rect x="25" y="52" width="1" height="1" fill="#eeffff" fill-opacity="0.80"/><rect x="26" y="51" width="1" height="1" fill="#eeffff" fill-opacity="0.45"/><rect x="26" y="52" width="1" height="1" fill="#eeffff" fill-opacity="0.80"/><rect x="27" y="51" width="1" height="1" fill="#eeffff" fill-opacity="0.85"/><rect x="27" y="52" width="1" height="1" fill="#eeffff" fill-opacity="0.80"/><rect x="28" y="51" width="1" height="1" fill="#eeffff" fill-opacity="0.45"/><rect x="28" y="52" width="1" height="1" fill="#eeffff" fill-opacity="0.80"/><rect x="29" y="51" width="1" height="1" fill="#eeffff" fill-opacity="0.45"/><rect x="29" y="52" width="1" height="1" fill="#eeffff" fill-opacity="0.80"/><rect x="31" y="51" width="1" height="1" fill="#c792ea" fill-opacity="0.50"/><rect x="31" y="52" width="1" height="1" fill="#c792ea" fill-opacity="0.35"/><rect x="33" y="51" width="1" height="1" fill="#f78c6c" fill-opacity="0.85"/><rect x="33" y="52" width="1" height="1" fill="#f78c6c" fill-opacity="0.80"/><rect x="34" y="51" width="1" height="1" fill="#f78c6c" fill-opacity="0.85"/><rect x="34" y="52" width="1" height="1" fill="#f78c6c" fill-opacity="0.80"/><rect x="35" y="51" width="1" height="1" fill="#89ddff" fill-opacity="0.25"/><rect x="35" y="52" width="1" height="1" fill="#89ddff" fill-opacity="0.50"/><rect x="12" y="53" width="1" height="1" fill="#eeffff" fill-opacity="0.45"/><rect x="12" y="54" width="1" height="1" fill="#eeffff" fill-opacity="0.80"/><rect x="13" y="53" width="1" height="1" fill="#eeffff" fill-opacity="0.45"/><rect x="13" y="54" width="1" height="1" fill="#eeffff" fill-opacity="0.80"/><rect x="14" y="53" width="1" height="1" fill="#eeffff" fill-opacity="0.45"/><rect x="14" y="54" width="1" height="1" fill="#eeffff" fill-opacity="0.80"/><rect x="14" y="53" width="1" height="1" fill="#eeffff" fill-opacity="0.45"/><rect x="14" y="54" width="1" height="1" fill="#eeffff" fill-opacity="0.80"/><rect x="15" y="53" width="1" height="1" fill="#eeffff" fill-opacity="0.45"/><rect x="15" y="54" width="1" height="1" fill="#eeffff" fill-opacity="0.80"/><rect x="16" y="53" width="1" height="1" fill="#eeffff" fill-opacity="0.45"/><rect x="16" y="54" width="1" height="1" fill="#eeffff" fill-opacity="0.80"/><rect x="17" y="53" width="1" height="1" fill="#eeffff" fill-opacity="0.85"/><rect x="17" y="54" width="1" height="1" fill="#eeffff" fill-opacity="0.80"/><rect x="18" y="53" width="1" height="1" fill="#eeffff" fill-opacity="0.85"/><rect x="18" y="54" width="1" height="1" fill="#eeffff" fill-opacity="0.80"/><rect x="19" y="53" width="1" height="1" fill="#eeffff" fill-opacity="0.45"/><rect x="19" y="54" width="1" height="1" fill="#eeffff" fill-opacity="0.80"/><rect x="20" y="53" width="1" height="1" fill="#eeffff" fill-opacity="0.45"/><rect x="20" y="54" width="1" height="1" fill="#eeffff" fill-opacity="0.80"/><rect x="21" y="53" width="1" height="1" fill="#eeffff" fill-opacity="0.85"/><rect x="21" y="54" width="1" height="1" fill="#eeffff" fill-opacity="0.80"/><rect x="22" y="53" width="1" height="1" fill="#eeffff" fill-opacity="0.45"/><rect x="22" y="54" width="1" height="1" fill="#eeffff" fill-opacity="0.80"/><rect x="23" y="53" width="1" height="1" fill="#eeffff" fill-opacity="0.45"/><rect x="23" y="54" width="1" height="1" fill="#eeffff" fill-opacity="0.80"/><rect x="25" y="53" width="1" height="1" fill="#c792ea" fill-opacity="0.50"/><rect x="25" y="54" width="1" height="1" fill="#c792ea" fill-opacity="0.35"/><rect x="27" y="53" width="1" height="1" fill="#eeffff" fill-opacity="0.45"/><rect x="27" y="54" width="1" height="1" fill="#eeffff" fill-opacity="0.80"/><rect x="28" y="53" width="1" height="1" fill="#eeffff" fill-opacity="0.45"/><rect x="28" y="54" width="1" height="1" fill="#eeffff" fill-opacity="0.80"/><rect x="29" y="53" width="1" height="1" fill="#eeffff" fill-opacity="0.45"/><rect x="29" y="54" width="1" height="1" fill="#eeffff" fill-opacity="0.80"/><rect x="30" y="53" width="1" height="1" fill="#eeffff" fill-opacity="0.45"/><rect x="30" y="54" width="1" height="1" fill="#eeffff" fill-opacity="0.80"/><rect x="31" y="53" width="1" height="1" fill="#eeffff" fill-opacity="0.45"/><rect x="31" y="54" width="1" height="1" fill="#eeffff" fill-opacity="0.80"/><rect x="32" y="53" width="1" height="1" fill="#eeffff" fill-opacity="0.45"/><rect x="32" y="54" width="1" height="1" fill="#eeffff" fill-opacity="0.80"/><rect x="33" y="53" width="1" height="1" fill="#eeffff" fill-opacity="0.85"/><rect x="33" y="54" width="1" height="1" fill="#eeffff" fill-opacity="0.80"/><rect x="34" y="53" width="1" height="1" fill="#eeffff" fill-opacity="0.85"/><rect x="34" y="54" width="1" height="1" fill="#eeffff" fill-opacity="0.80"/><rect x="35" y="53" width="1" height="1" fill="#eeffff" fill-opacity="0.45"/><rect x="35" y="54" width="1" height="1" fill="#eeffff" fill-opacity="0.80"/><rect x="36" y="53" width="1" height="1" fill="#eeffff" fill-opacity="0.45"/><rect x="36" y="54" width="1" height="1" fill="#eeffff" fill-opacity="0.80"/><rect x="37" y="53" width="1" height="1" fill="#eeffff" fill-opacity="0.85"/><rect x="37" y="54" width="1" height="1" fill="#eeffff" fill-opacity="0.80"/><rect x="38" y="53" width="1" height="1" fill="#eeffff" fill-opacity="0.45"/><rect x="38" y="54" width="1" height="1" fill="#eeffff" fill-opacity="0.80"/><rect x="39" y="53" width="1" height="1" fill="#eeffff" fill-opacity="0.45"/><rect x="39" y="54" width="1" height="1" fill="#eeffff" fill-opacity="0.80"/><rect x="41" y="53" width="1" height="1" fill="#c792ea" fill-opacity="0.50"/><rect x="41" y="54" width="1" height="1" fill="#c792ea" fill-opacity="0.35"/><rect x="42" y="53" width="1" height="1" fill="#f78c6c" fill-opacity="0.85"/><rect x="42" y="54" width="1" height="1" fill="#f78c6c" fill-opacity="0.80"/><rect x="43" y="53" width="1" height="1" fill="#f78c6c" fill-opacity="0.85"/><rect x="43" y="54" width="1" height="1" fill="#f78c6c" fill-opacity="0.80"/><rect x="44" y="53" width="1" height="1" fill="#89ddff" fill-opacity="0.25"/><rect x="44" y="54" width="1" height="1" fill="#89ddff" fill-opacity="0.50"/><rect x="12" y="55" width="1" height="1" fill="#eeffff" fill-opacity="0.45"/><rect x="12" y="56" width="1" height="1" fill="#eeffff" fill-opacity="0.80"/><rect x="13" y="55" width="1" height="1" fill="#eeffff" fill-opacity="0.45"/><rect x="13" y="56" width="1" height="1" fill="#eeffff" fill-opacity="0.80"/><rect x="14" y="55" width="1" height="1" fill="#eeffff" fill-opacity="0.45"/><rect x="14" y="56" width="1" height="1" fill="#eeffff" fill-opacity="0.80"/><rect x="14" y="55" width="1" height="1" fill="#eeffff" fill-opacity="0.45"/><rect x="14" y="56" width="1" height="1" fill="#eeffff" fill-opacity="0.80"/><rect x="15" y="55" width="1" height="1" fill="#eeffff" fill-opacity="0.45"/><rect x="15" y="56" width="1" height="1" fill="#eeffff" fill-opacity="0.80"/><rect x="16" y="55" width="1" height="1" fill="#eeffff" fill-opacity="0.45"/><rect x="16" y="56" width="1" height="1" fill="#eeffff" fill-opacity="0.80"/><rect x="17" y="55" width="1" height="1" fill="#eeffff" fill-opacity="0.45"/><rect x="17" y="56" width="1" height="1" fill="#eeffff" fill-opacity="0.80"/><rect x="18" y="55" width="1" height="1" fill="#eeffff" fill-opacity="0.85"/><rect x="18" y="56" width="1" height="1" fill="#eeffff" fill-opacity="0.80"/><rect x="19" y="55" width="1" height="1" fill="#eeffff" fill-opacity="0.85"/><rect x="19" y="56" width="1" height="1" fill="#eeffff" fill-opacity="0.80"/><rect x="20" y="55" width="1" height="1" fill="#eeffff" fill-opacity="0.45"/><rect x="20" y="56" width="1" height="1" fill="#eeffff" fill-opacity="0.80"/><rect x="21" y="55" width="1" height="1" fill="#eeffff" fill-opacity="0.45"/><rect x="21" y="56" width="1" height="1" fill="#eeffff" fill-opacity="0.80"/><rect x="22" y="55" width="1" height="1" fill="#eeffff" fill-opacity="0.85"/><rect x="22" y="56" width="1" height="1" fill="#eeffff" fill-opacity="0.80"/><rect x="23" y="55" width="1" height="1" fill="#eeffff" fill-opacity="0.45"/><rect x="23" y="56" width="1" height="1" fill="#eeffff" fill-opacity="0.80"/><rect x="24" y="55" width="1" height="1" fill="#eeffff" fill-opacity="0.45"/><rect x="24" y="56" width="1" height="1" fill="#eeffff" fill-opacity="0.80"/><rect x="26" y="55" width="1" height="1" fill="#c792ea" fill-opacity="0.50"/><rect x="26" y="56" width="1" height="1" fill="#c792ea" fill-opacity="0.35"/><rect x="28" y="55" width="1" height="1" fill="#eeffff" fill-opacity="0.45"/><rect x="28" y="56" width="1" height="1" fill="#eeffff" fill-opacity="0.80"/><rect x="29" y="55" width="1" height="1" fill="#eeffff" fill-opacity="0.45"/><rect x="29" y="56" width="1" height="1" fill="#eeffff" fill-opacity="0.80"/><rect x="30" y="55" width="1" height="1" fill="#eeffff" fill-opacity="0.45"/><rect x="30" y="56" width="1" height="1" fill="#eeffff" fill-opacity="0.80"/><rect x="31" y="55" width="1" height="1" fill="#eeffff" fill-opacity="0.45"/><rect x="31" y="56" width="1" height="1" fill="#eeffff" fill-opacity="0.80"/><rect x="32" y="55" width="1" height="1" fill="#eeffff" fill-opacity="0.45"/><rect x="32" y="56" width="1" height="1" fill="#eeffff" fill-opacity="0.80"/><rect x="33" y="55" width="1" height="1" fill="#eeffff" fill-opacity="0.45"/><rect x="33" y="56" width="1" height="1" fill="#eeffff" fill-opacity="0.80"/><rect x="34" y="55" width="1" height="1" fill="#eeffff" fill-opacity="0.45"/><rect x="34" y="56" width="1" height="1" fill="#eeffff" fill-opacity="0.80"/><rect x="35" y="55" width="1" height="1" fill="#eeffff" fill-opacity="0.85"/><rect x="35" y="56" width="1" height="1" fill="#eeffff" fill-opacity="0.80"/><rect x="36" y="55" width="1" height="1" fill="#eeffff" fill-opacity="0.85"/><rect x="36" y="56" width="1" height="1" fill="#eeffff" fill-opacity="0.80"/><rect x="37" y="55" width="1" height="1" fill="#eeffff" fill-opacity="0.45"/><rect x="37" y="56" width="1" height="1" fill="#eeffff" fill-opacity="0.80"/><rect x="38" y="55" width="1" height="1" fill="#eeffff" fill-opacity="0.45"/><rect x="38" y="56" width="1" height="1" fill="#eeffff" fill-opacity="0.80"/><rect x="39" y="55" width="1" height="1" fill="#eeffff" fill-opacity="0.85"/><rect x="39" y="56" width="1" height="1" fill="#eeffff" fill-opacity="0.80"/><rect x="40" y="55" width="1" height="1" fill="#eeffff" fill-opacity="0.45"/><rect x="40" y="56" width="1" height="1" fill="#eeffff" fill-opacity="0.80"/><rect x="41" y="55" width="1" height="1" fill="#eeffff" fill-opacity="0.45"/><rect x="41" y="56" width="1" height="1" fill="#eeffff" fill-opacity="0.80"/><rect x="42" y="55" width="1" height="1" fill="#c792ea" fill-opacity="0.50"/><rect x="42" y="56" width="1" height="1" fill="#c792ea" fill-opacity="0.35"/><rect x="44" y="55" width="1" height="1" fill="#f78c6c" fill-opacity="0.85"/><rect x="44" y="56" width="1" height="1" fill="#f78c6c" fill-opacity="0.80"/><rect x="45" y="55" width="1" height="1" fill="#f78c6c" fill-opacity="0.85"/><rect x="45" y="56" width="1" height="1" fill="#f78c6c" fill-opacity="0.80"/><rect x="47" y="55" width="1" height="1" fill="#c792ea" fill-opacity="0.50"/><rect x="47" y="56" width="1" height="1" fill="#c792ea" fill-opacity="0.35"/><rect x="49" y="55" width="1" height="1" fill="#eeffff" fill-opacity="0.45"/><rect x="49" y="56" width="1" height="1" fill="#eeffff" fill-opacity="0.80"/><rect x="50" y="55" width="1" height="1" fill="#eeffff" fill-opacity="0.45"/><rect x="50" y="56" width="1" height="1" fill="#eeffff" fill-opacity="0.80"/><rect x="51" y="55" width="1" height="1" fill="#eeffff" fill-opacity="0.45"/><rect x="51" y="56" width="1" height="1" fill="#eeffff" fill-opacity="0.80"/><rect x="52" y="55" width="1" height="1" fill="#89ddff" fill-opacity="0.25"/><rect x="52" y="56" width="1" height="1" fill="#89ddff" fill-opacity="0.50"/><rect x="8" y="57" width="1" height="1" fill="#89ddff" fill-opacity="0.50"/><rect x="8" y="58" width="1" height="1" fill="#89ddff" fill-opacity="0.35"/><rect x="8" y="61" width="1" height="1" fill="#89ddff" fill-opacity="0.45"/><rect x="8" y="62" width="1" height="1" fill="#89ddff" fill-opacity="0.80"/><rect x="9" y="61" width="1" height="1" fill="#89ddff" fill-opacity="0.85"/><rect x="9" y="62" width="1" height="1" fill="#89ddff" fill-opacity="0.80"/><rect x="10" y="61" width="1" height="1" fill="#89ddff" fill-opacity="0.50"/><rect x="10" y="62" width="1" height="1" fill="#89ddff" fill-opacity="0.35"/><rect x="11" y="61" width="1" height="1" fill="#eeffff" fill-opacity="0.45"/><rect x="11" y="62" width="1" height="1" fill="#eeffff" fill-opacity="0.80"/><rect x="13" y="61" width="1" height="1" fill="#c792ea" fill-opacity="0.50"/><rect x="13" y="62" width="1" height="1" fill="#c792ea" fill-opacity="0.35"/><rect x="14" y="61" width="1" height="1" fill="#c792ea" fill-opacity="0.50"/><rect x="14" y="62" width="1" height="1" fill="#c792ea" fill-opacity="0.35"/><rect x="15" y="61" width="1" height="1" fill="#eeffff" fill-opacity="0.45"/><rect x="15" y="62" width="1" height="1" fill="#eeffff" fill-opacity="0.80"/><rect x="16" y="61" width="1" height="1" fill="#eeffff" fill-opacity="0.45"/><rect x="16" y="62" width="1" height="1" fill="#eeffff" fill-opacity="0.80"/><rect x="17" y="61" width="1" height="1" fill="#eeffff" fill-opacity="0.45"/><rect x="17" y="62" width="1" height="1" fill="#eeffff" fill-opacity="0.80"/><rect x="18" y="61" width="1" height="1" fill="#eeffff" fill-opacity="0.45"/><rect x="18" y="62" width="1" height="1" fill="#eeffff" fill-opacity="0.80"/><rect x="19" y="61" width="1" height="1" fill="#eeffff" fill-opacity="0.45"/><rect x="19" y="62" width="1" height="1" fill="#eeffff" fill-opacity="0.80"/><rect x="20" y="61" width="1" height="1" fill="#eeffff" fill-opacity="0.45"/><rect x="20" y="62" width="1" height="1" fill="#eeffff" fill-opacity="0.80"/><rect x="21" y="61" width="1" height="1" fill="#eeffff" fill-opacity="0.45"/><rect x="21" y="62" width="1" height="1" fill="#eeffff" fill-opacity="0.80"/><rect x="22" y="61" width="1" height="1" fill="#eeffff" fill-opacity="0.85"/><rect x="22" y="62" width="1" height="1" fill="#eeffff" fill-opacity="0.80"/><rect x="23" y="61" width="1" height="1" fill="#eeffff" fill-opacity="0.85"/><rect x="23" y="62" width="1" height="1" fill="#eeffff" fill-opacity="0.80"/><rect x="24" y="61" width="1" height="1" fill="#eeffff" fill-opacity="0.45"/><rect x="24" y="62" width="1" height="1" fill="#eeffff" fill-opacity="0.80"/><rect x="25" y="61" width="1" height="1" fill="#eeffff" fill-opacity="0.45"/><rect x="25" y="62" width="1" height="1" fill="#eeffff" fill-opacity="0.80"/><rect x="26" y="61" width="1" height="1" fill="#eeffff" fill-opacity="0.85"/><rect x="26" y="62" width="1" height="1" fill="#eeffff" fill-opacity="0.80"/><rect x="27" y="61" width="1" height="1" fill="#eeffff" fill-opacity="0.45"/><rect x="27" y="62" width="1" height="1" fill="#eeffff" fill-opacity="0.80"/><rect x="28" y="61" width="1" height="1" fill="#eeffff" fill-opacity="0.45"/><rect x="28" y="62" width="1" height="1" fill="#eeffff" fill-opacity="0.80"/><rect x="29" y="61" width="1" height="1" fill="#89ddff" fill-opacity="0.50"/><rect x="29" y="62" width="1" height="1" fill="#89ddff" fill-opacity="0.35"/><rect x="30" y="61" width="1" height="1" fill="#89ddff" fill-opacity="0.50"/><rect x="30" y="62" width="1" height="1" fill="#89ddff" fill-opacity="0.35"/><rect x="12" y="63" width="1" height="1" fill="#82aaff" fill-opacity="0.45"/><rect x="12" y="64" width="1" height="1" fill="#82aaff" fill-opacity="0.80"/><rect x="13" y="63" width="1" height="1" fill="#82aaff" fill-opacity="0.45"/><rect x="13" y="64" width="1" height="1" fill="#82aaff" fill-opacity="0.80"/><rect x="14" y="63" width="1" height="1" fill="#82aaff" fill-opacity="0.45"/><rect x="14" y="64" width="1" height="1" fill="#82aaff" fill-opacity="0.80"/><rect x="14" y="63" width="1" height="1" fill="#82aaff" fill-opacity="0.45"/><rect x="14" y="64" width="1" height="1" fill="#82aaff" fill-opacity="0.80"/><rect x="15" y="63" width="1" height="1" fill="#82aaff" fill-opacity="0.85"/><rect x="15" y="64" width="1" height="1" fill="#82aaff" fill-opacity="0.80"/><rect x="16" y="63" width="1" height="1" fill="#82aaff" fill-opacity="0.85"/><rect x="16" y="64" width="1" height="1" fill="#82aaff" fill-opacity="0.80"/><rect x="17" y="63" width="1" height="1" fill="#89ddff" fill-opacity="0.50"/><rect x="17" y="64" width="1" height="1" fill="#89ddff" fill-opacity="0.35"/><rect x="18" y="63" width="1" height="1" fill="#89ddff" fill-opacity="0.50"/><rect x="18" y="64" width="1" height="1" fill="#89ddff" fill-opacity="0.35"/><rect x="19" y="63" width="1" height="1" fill="#e0ecee" fill-opacity="0.50"/><rect x="19" y="64" width="1" height="1" fill="#e0ecee" fill-opacity="0.35"/><rect x="20" y="63" width="1" height="1" fill="#e0ecee" fill-opacity="0.85"/><rect x="20" y="64" width="1" height="1" fill="#e0ecee" fill-opacity="0.80"/><rect x="22" y="63" width="1" height="1" fill="#89ddff" fill-opacity="0.50"/><rect x="22" y="64" width="1" height="1" fill="#89ddff" fill-opacity="0.35"/><rect x="23" y="63" width="1" height="1" fill="#89ddff" fill-opacity="0.25"/><rect x="23" y="64" width="1" height="1" fill="#89ddff" fill-opacity="0.50"/><rect x="25" y="63" width="1" height="1" fill="#eeffff" fill-opacity="0.45"/><rect x="25" y="64" width="1" height="1" fill="#eeffff" fill-opacity="0.80"/><rect x="26" y="63" width="1" height="1" fill="#89ddff" fill-opacity="0.50"/><rect x="26" y="64" width="1" height="1" fill="#89ddff" fill-opacity="0.35"/><rect x="27" y="63" width="1" height="1" fill="#89ddff" fill-opacity="0.25"/><rect x="27" y="64" width="1" height="1" fill="#89ddff" fill-opacity="0.50"/><rect x="8" y="65" width="1" height="1" fill="#89ddff" fill-opacity="0.50"/><rect x="8" y="66" width="1" height="1" fill="#89ddff" fill-opacity="0.35"/><rect x="4" y="67" width="1" height="1" fill="#89ddff" fill-opacity="0.50"/><rect x="4" y="68" width="1" height="1" fill="#89ddff" fill-opacity="0.35"/><rect x="4" y="69" width="1" height="1" fill="#89ddff" fill-opacity="0.45"/><rect x="4" y="70" width="1" height="1" fill="#89ddff" fill-opacity="0.80"/><rect x="5" y="69" width="1" height="1" fill="#89ddff" fill-opacity="0.45"/><rect x="5" y="70" width="1" height="1" fill="#89ddff" fill-opacity="0.80"/><rect x="6" y="69" width="1" height="1" fill="#89ddff" fill-opacity="0.85"/><rect x="6" y="70" width="1" height="1" fill="#89ddff" fill-opacity="0.80"/><rect x="7" y="69" width="1" height="1" fill="#89ddff" fill-opacity="0.45"/><rect x="7" y="70" width="1" height="1" fill="#89ddff" fill-opacity="0.80"/><rect x="8" y="69" width="1" height="1" fill="#89ddff" fill-opacity="0.45"/><rect x="8" y="70" width="1" height="1" fill="#89ddff" fill-opacity="0.80"/><rect x="9" y="69" width="1" height="1" fill="#89ddff" fill-opacity="0.45"/><rect x="9" y="70" width="1" height="1" fill="#89ddff" fill-opacity="0.80"/><rect x="11" y="69" width="1" height="1" fill="#f78c6c" fill-opacity="0.85"/><rect x="11" y="70" width="1" height="1" fill="#f78c6c" fill-opacity="0.80"/><rect x="12" y="69" width="1" height="1" fill="#89ddff" fill-opacity="0.25"/><rect x="12" y="70" width="1" height="1" fill="#89ddff" fill-opacity="0.50"/><rect x="0" y="71" width="1" height="1" fill="#89ddff" fill-opacity="0.50"/><rect x="0" y="72" width="1" height="1" fill="#89ddff" fill-opacity="0.35"/></svg>

  <div class="abs" style="left:837.5px;top:394px;width:13px;height:1.6px;background:#f1b52c;"></div>

  <div class="wm">codevscolor.com</div>

  <!-- status bar -->
  <div class="abs" style="left:0;top:714px;width:850px;height:20px;background:#24333a"></div>
  <svg class="abs" style="left:0;top:710px" width="851" height="25" viewBox="55 746 851 25">
    <circle cx="72.5" cy="761.9" r="5.4" fill="#4d7284"/>
    <path d="M70.1 759.5 L74.9 764.3 M74.9 759.5 L70.1 764.3" stroke="#24333a" stroke-width="1.5"/>
    <path d="M99.3 756.4 L104.8 767.3 H93.8 Z" fill="#4d7284" stroke="#4d7284" stroke-width="0.5" stroke-linejoin="round"/>
    <path d="M99.3 759.6 V763.8 M99.3 764.9 V766.2" stroke="#24333a" stroke-width="1.2"/>
    <circle cx="857.1" cy="761.2" r="7.1" fill="#4d7284"/>
    <ellipse cx="854.8" cy="758.9" rx="1" ry="1.3" fill="#24333a"/>
    <ellipse cx="859.5" cy="758.9" rx="1" ry="1.3" fill="#24333a"/>
    <path d="M853.2 762.4 Q857.1 766.8 861 762.4" fill="none" stroke="#24333a" stroke-width="1.3"/>
    <path d="M885 755 C882.2 757 880.6 759 880.6 762 L879.2 765.2 H890.8 L889.4 762 C889.4 759 887.8 757 885 755 Z M883.6 766.2 H886.4 V767.6 H883.6 Z" fill="#4d7284"/>
  </svg>
  <div class="status" style="left:27px;">0</div>
  <div class="status" style="left:54px;">0</div>
  <div class="status" style="left:263px;font-size:12.3px;">(Global Scope)</div>
  <div class="status" style="left:364px;">Ln 41, Col 1</div>
  <div class="status" style="left:442.5px;">Spaces: 4</div>
  <div class="status" style="left:511.5px;">UTF-8</div>
  <div class="status" style="left:561.5px;">LF</div>
  <div class="status" style="left:589px;">C</div>
  <div class="status" style="left:612.5px;">Mac</div>
  <div class="status" style="left:651px;font-size:12.45px;">Variables extraction fail</div>
</div></div>
</body></html>
